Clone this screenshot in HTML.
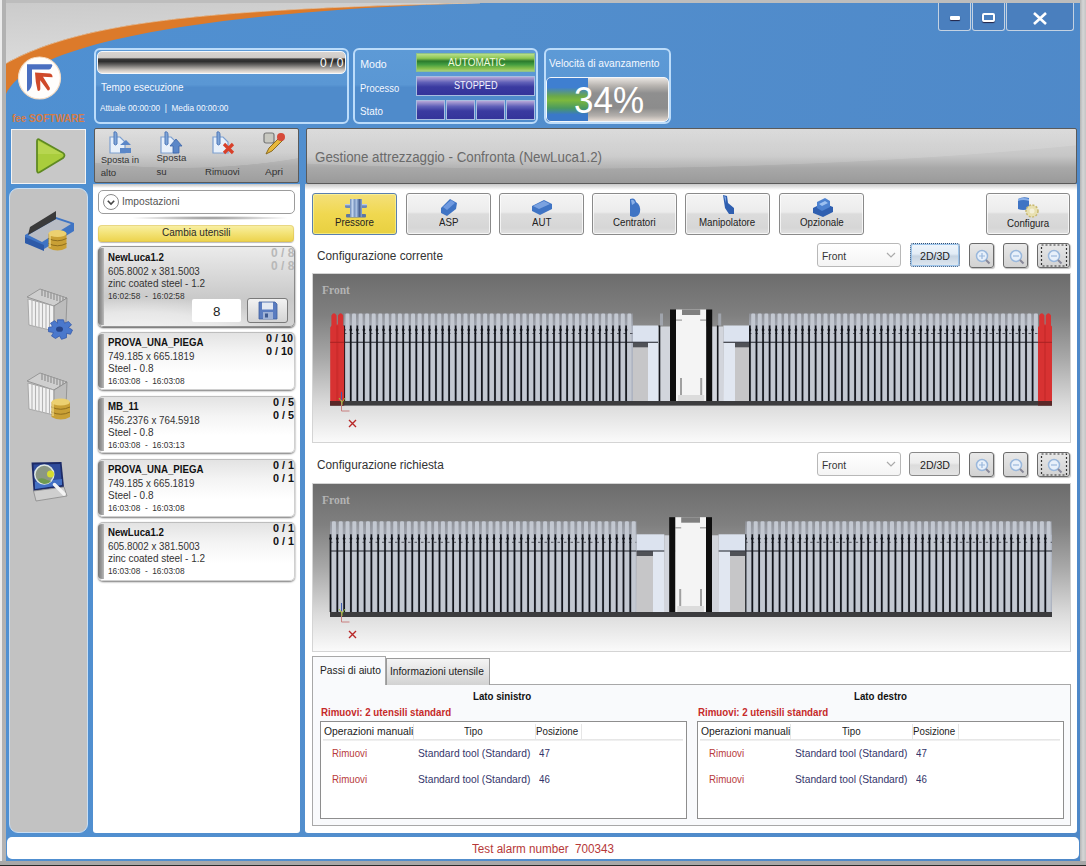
<!DOCTYPE html>
<html><head><meta charset="utf-8"><style>
*{margin:0;padding:0;box-sizing:border-box}
html,body{width:1086px;height:866px;overflow:hidden}
body{position:relative;background:#c4c4c4;font-family:"Liberation Sans",sans-serif;color:#222}
.a{position:absolute}
.t{position:absolute;white-space:pre;line-height:1}
</style></head><body>
<div class="a" style="left:0px;top:0px;width:2px;height:866px;background:#ececec"></div>
<div class="a" style="left:2px;top:0px;width:4px;height:866px;background:#b2b2b2"></div>
<div class="a" style="left:1080px;top:0px;width:6px;height:866px;background:linear-gradient(90deg,#b4b4b4,#d6d6d6 50%,#c4c4c4)"></div>
<div class="a" style="left:6px;top:0px;width:1074px;height:3px;background:#bdbdbd"></div>
<div class="a" style="left:0px;top:861px;width:1086px;height:5px;background:#a8a8a8"></div>
<div class="a" style="left:0px;top:865px;width:1086px;height:1px;background:#2a2a2a"></div>
<div class="a" style="left:6px;top:3px;width:1074px;height:858px;background:linear-gradient(100deg,#4f90d2 0%,#528ecd 40%,#4e88c8 100%)"></div>
<svg class="a" style="left:6px;top:3px" width="480" height="100" viewBox="6 3 480 100">
<defs><linearGradient id="tg" x1="0" y1="0" x2="0.3" y2="1"><stop offset="0" stop-color="#cbcbcb"/><stop offset="1" stop-color="#dcdcdc"/></linearGradient></defs><path d="M6,3 L482,3 L480,3 C183.9,9.26 76.9,25 6,63.4 Z" fill="url(#tg)"/>
<path d="M6,63.4 C76.9,25 183.9,9.26 480,3 L482,3 C357.7,6.16 40.4,22.17 6,94 Z" fill="#dc7a2a"/>
<path d="M6,63.4 C76.9,25 183.9,9.26 480,3" fill="none" stroke="#f0c8a0" stroke-width="1" opacity=".7"/>
</svg>
<svg class="a" style="left:14px;top:52px" width="52" height="52" viewBox="0 0 52 52">
<circle cx="25.5" cy="26" r="21" fill="#fffefc" stroke="#f4dcc4" stroke-width="1.2"/>
<path d="M13,12.3 L37.5,12.3 Q39,12.8 38,14.5 Q37,17.2 35,17.4 L18,17.4 L18,31 Q17.5,37 13.5,39.5 Q13,39 13,37 Z" fill="#4a6fc0"/>
<path d="M21,20.5 L36,21.5 Q38.8,22.5 38.5,25.2 L29,24.8 L35.8,35.8 Q36.2,38.6 33.8,38.4 L26.2,28.2 L26.3,37.2 Q25.6,39.6 23.6,38.6 Q21.3,30 21,20.5 Z" fill="#cf4a2a"/>
</svg>
<div class="t" style="left:11.9px;top:112.8px;font-size:10.8px;color:#e27a36;font-weight:bold;transform:scaleX(0.911);transform-origin:0 0;opacity:.9">fee SOFTWARE</div>
<div class="a" style="left:938px;top:3px;width:33px;height:28px;background:#4a7fbe;border:1.5px solid #c4d2e2;border-top:none;border-radius:0 0 3px 3px"></div>
<div class="a" style="left:972px;top:3px;width:33px;height:28px;background:#4a7fbe;border:1.5px solid #c4d2e2;border-top:none;border-radius:0 0 3px 3px"></div>
<div class="a" style="left:1006px;top:3px;width:68px;height:28px;background:#4a7fbe;border:1.5px solid #c4d2e2;border-top:none;border-radius:0 0 3px 3px"></div>
<div class="a" style="left:950px;top:16px;width:10px;height:4px;background:#fff;border-radius:1px;box-shadow:0 1px 1px #224"></div>
<div class="a" style="left:982px;top:13px;width:13px;height:9px;border:2.5px solid #fff;border-radius:2px;box-shadow:0 1px 1px #224"></div>
<svg class="a" style="left:1032px;top:12px" width="16" height="13" viewBox="0 0 16 13"><path d="M2,1 L14,12 M14,1 L2,12" stroke="#fff" stroke-width="2.6"/></svg>
<div class="a" style="left:94px;top:48px;width:255px;height:76px;border:2px solid #bcdcfa;border-radius:6px;background:linear-gradient(#5d9ad6 0%,#5a97d4 48%,#4f8bcb 52%,#4f8bcb 100%)"></div>
<div class="a" style="left:97px;top:51px;width:249px;height:23px;border:1.5px solid #f4f8fc;border-radius:5px;background:linear-gradient(#d8d4d0 0%,#d0ccc8 26%,#3a3a3a 34%,#2e2e2e 45%,#6a6866 62%,#c8c2bc 85%,#eee6de 100%)"></div>
<div class="t" style="left:320.0px;top:57.4px;font-size:12.5px;color:#fff;transform:scaleX(0.966);transform-origin:0 0;">0 / 0</div>
<div class="t" style="left:100.6px;top:81.9px;font-size:11.5px;color:#f4f8ff;transform:scaleX(0.861);transform-origin:0 0;">Tempo esecuzione</div>
<div class="t" style="left:100.2px;top:104.4px;font-size:8.8px;color:#f4f8ff;transform:scaleX(0.939);transform-origin:0 0;">Attuale 00:00:00  |  Media 00:00:00</div>
<div class="a" style="left:353px;top:48px;width:185px;height:76px;border:2px solid #bcdcfa;border-radius:6px;background:linear-gradient(#5d9ad6 0%,#5a97d4 48%,#4f8bcb 52%,#4f8bcb 100%)"></div>
<div class="t" style="left:360.2px;top:59.0px;font-size:10.6px;color:#f4f8ff;">Modo</div>
<div class="t" style="left:360.2px;top:82.8px;font-size:10.6px;color:#f4f8ff;transform:scaleX(0.889);transform-origin:0 0;">Processo</div>
<div class="t" style="left:360.2px;top:106.2px;font-size:10.6px;color:#f4f8ff;transform:scaleX(0.929);transform-origin:0 0;">Stato</div>
<div class="a" style="left:416px;top:53px;width:119px;height:19px;border:1px solid #8fc28a;background:linear-gradient(#b9df8a 0%,#8cc653 25%,#2c7a2c 42%,#3f9a3f 60%,#84bf4c 85%,#a8cf7a 100%)"></div>
<div class="t" style="left:447.6px;top:57.0px;font-size:11px;color:#f2fadc;transform:scaleX(0.902);transform-origin:0 0;">AUTOMATIC</div>
<div class="a" style="left:416px;top:76px;width:119px;height:20px;border:1px solid #a9bde0;background:linear-gradient(#b8a8d8 0%,#6060b8 30%,#3a3aa0 55%,#34349a 100%)"></div>
<div class="t" style="left:454.2px;top:80.4px;font-size:11px;color:#f4f4ff;transform:scaleX(0.831);transform-origin:0 0;">STOPPED</div>
<div class="a" style="left:416px;top:100px;width:29px;height:20px;border:1px solid #a9bde0;background:linear-gradient(#b8a8d8 0%,#6060b8 30%,#3a3aa0 55%,#34349a 100%)"></div>
<div class="a" style="left:446px;top:100px;width:29px;height:20px;border:1px solid #a9bde0;background:linear-gradient(#b8a8d8 0%,#6060b8 30%,#3a3aa0 55%,#34349a 100%)"></div>
<div class="a" style="left:476px;top:100px;width:29px;height:20px;border:1px solid #a9bde0;background:linear-gradient(#b8a8d8 0%,#6060b8 30%,#3a3aa0 55%,#34349a 100%)"></div>
<div class="a" style="left:506px;top:100px;width:29px;height:20px;border:1px solid #a9bde0;background:linear-gradient(#b8a8d8 0%,#6060b8 30%,#3a3aa0 55%,#34349a 100%)"></div>
<div class="a" style="left:544px;top:48px;width:127px;height:76px;border:2px solid #bcdcfa;border-radius:6px;background:linear-gradient(#5d9ad6 0%,#5a97d4 48%,#4f8bcb 52%,#4f8bcb 100%)"></div>
<div class="t" style="left:548.6px;top:57.8px;font-size:10.6px;color:#f4f8ff;transform:scaleX(0.962);transform-origin:0 0;">Velocità di avanzamento</div>
<div class="a" style="left:546px;top:77px;width:123px;height:45px;border:1.5px solid #f2f6fa;border-radius:5px;background:linear-gradient(#e8e4e0 0%,#b8b4b0 18%,#8f8f8f 35%,#8c8c8c 70%,#b4b0ac 88%,#e6dcd4 100%);overflow:hidden"></div>
<div class="a" style="left:547px;top:78px;width:41px;height:43px;background:linear-gradient(#3f7fd0 0%,#3f7fd0 22%,#6aa84a 42%,#7cb83e 52%,#4a9a60 70%,#3a78c8 85%,#3a78c8 100%);border-radius:4px 0 0 4px"></div>
<div class="t" style="left:574.2px;top:82.9px;font-size:36px;color:#fff;transform:scaleX(0.972);transform-origin:0 0;">34%</div>
<div class="a" style="left:11px;top:129px;width:75px;height:55px;background:#c8c8c8;border:1px solid #f4f4f4"></div>
<svg class="a" style="left:33px;top:137px" width="34" height="38" viewBox="0 0 34 38">
<path d="M4,4 Q4,1 7,3 L30,16 Q33,18 30,21 L7,35 Q4,37 4,33 Z" fill="#a9cd3c" stroke="#5f8a22" stroke-width="1.8"/>
<path d="M5,4 L30,17 L5,17 Z" fill="#c2dc5e" opacity=".6"/>
</svg>
<div class="a" style="left:9px;top:188px;width:79px;height:645px;background:#c2c2c2;border:1px solid #c9def3;border-radius:9px"></div>
<svg class="a" style="left:22px;top:207px" width="56" height="48" viewBox="0 0 56 48">
<path d="M3,28 L34,10 L52,16 L52,24 L22,42 L3,36 Z" fill="#3f74c4"/>
<path d="M6,28 L34,12 L49,17 L20,35 Z" fill="#b8bcc4"/>
<path d="M6,28 L34,12 L34,4 L8,20 Z" fill="#3a3a3a"/>
<path d="M3,30 L22,38 L22,44 L3,36 Z" fill="#2d5aa8"/>
<path d="M26.5,26.5 L26.5,41 Q35.5,46 44.5,41 L44.5,26.5 Z" fill="#c9a035"/>
<ellipse cx="35.5" cy="26.5" rx="9" ry="3.5" fill="#ecd070"/>
<path d="M26.5,31.5 Q35.5,36 44.5,31.5 M26.5,36.5 Q35.5,41 44.5,36.5" stroke="#8f6e1d" stroke-width="1" fill="none"/>
<path d="M28,28 V40" stroke="#f4e090" stroke-width="2" opacity=".6"/>
</svg>
<svg class="a" style="left:25px;top:287px" width="52" height="56" viewBox="0 0 52 56">
<path d="M2,10 L15,2 L42,11 L29,19 Z" fill="#cfcfcf" stroke="#8a8a8a" stroke-width=".8"/>
<path d="M17,3 V-4 M20,4 V-3 M23,5 V-2 M26,6 V-1 M29,7 V0 M32,8 V1 M35,9 V2 M38,10 V3 M41,11 V4" stroke="#9a9a9a" stroke-width="1.4" transform="translate(0,6)"/>
<path d="M3,12 L29,19 L29,44 L4,38 Z" fill="#f2f2f2" stroke="#9a9a9a" stroke-width=".8"/>
<path d="M7,13 V39 M10.5,14 V40 M14,15 V41 M17.5,16 V42 M21,17 V42.5 M24.5,18 V43" stroke="#b4b4b4" stroke-width="1.1"/>
<path d="M29,19 L42,11 L41,35 L29,44 Z" fill="#bcbcbc" stroke="#8a8a8a" stroke-width=".8"/>
<g transform="translate(35.5,43) scale(1,.85)">
<path d="M-3,-12 L3,-12 L4,-8 L8,-10 L11,-6 L8,-3 L12,0 L10,5 L6,4 L6,9 L1,11 L-1,7 L-5,10 L-9,7 L-7,3 L-12,2 L-12,-3 L-8,-4 L-10,-8 L-6,-11 L-3,-8 Z" fill="#4a78cc" stroke="#2f56a8" stroke-width=".8"/>
<ellipse cx="-1" cy="-1" rx="3.5" ry="3" fill="#27458a"/>
</g>
</svg>
<svg class="a" style="left:26px;top:371px" width="46" height="52" viewBox="0 0 46 52">
<path d="M1,10 L14,2 L41,11 L28,19 Z" fill="#cfcfcf" stroke="#8a8a8a" stroke-width=".8"/>
<path d="M16,3 V-4 M19,4 V-3 M22,5 V-2 M25,6 V-1 M28,7 V0 M31,8 V1 M34,9 V2 M37,10 V3 M40,11 V4" stroke="#9a9a9a" stroke-width="1.4" transform="translate(0,6)"/>
<path d="M2,12 L28,19 L28,44 L3,38 Z" fill="#f2f2f2" stroke="#9a9a9a" stroke-width=".8"/>
<path d="M6,13 V39 M9.5,14 V40 M13,15 V41 M16.5,16 V42 M20,17 V42.5 M23.5,18 V43" stroke="#b4b4b4" stroke-width="1.1"/>
<path d="M28,19 L41,11 L40,35 L28,44 Z" fill="#bcbcbc" stroke="#8a8a8a" stroke-width=".8"/>
<path d="M25.5,31 L25.5,46 Q34.7,51 44,46 L44,31 Z" fill="#c9a035"/>
<ellipse cx="34.7" cy="31" rx="9.2" ry="3.6" fill="#ecd070"/>
<path d="M25.5,36 Q34.7,40.5 44,36 M25.5,41 Q34.7,45.5 44,41" stroke="#8f6e1d" stroke-width="1" fill="none"/>
<path d="M27,32.5 V45" stroke="#f4e090" stroke-width="2" opacity=".6"/>
</svg>
<svg class="a" style="left:29px;top:460px" width="40" height="44" viewBox="0 0 40 44">
<path d="M2.5,2.5 L32.5,2 L35,27 L4.5,31 Z" fill="#1c2a66"/>
<path d="M4.5,4.5 L31,4 L33,25 L6,29 Z" fill="#2f4c9c"/>
<path d="M6,22 L33,19 L33,25 L6,29 Z" fill="#4a7ad0" opacity=".8"/>
<path d="M4.5,31 L35,27 L38,36 L7,41 Z" fill="#cfcfcf" stroke="#8a8a8a" stroke-width=".8"/>
<circle cx="15.3" cy="14.6" r="9.5" fill="#8b9784" stroke="#dfe8e4" stroke-width="1.5"/>
<path d="M9,19 Q14,17 18,20 L22,21 Q20,24 15,24 Q10,23 9,19 Z" fill="#6f9a50"/>
<circle cx="21.5" cy="14" r="3.5" fill="#d6dc30"/>
<path d="M25.5,24.5 L35,34" stroke="#f4f4f4" stroke-width="3.5" stroke-linecap="round"/>
</svg>
<div class="a" style="left:94px;top:128px;width:205px;height:55px;border:1px solid #5a5a5a;border-radius:2px;background:radial-gradient(ellipse 245px 79px at 86px -40px,rgba(255,255,255,.16) 99.3%,rgba(255,255,255,0) 100%),linear-gradient(#d8d8d8 0%,#c6c6c6 45%,#acacac 70%,#9e9e9e 100%)"></div>
<svg class="a" style="left:108px;top:131px" width="24" height="24" viewBox="0 0 24 24">
<path d="M2,6 L12,6 L17,11 L17,22 L2,22 Z" fill="#e8f0fa" stroke="#7c9fd0" stroke-width="1.2"/>
<path d="M6,1 Q9,0 9,4 L9,13 Q7.5,15 6,13 Z" fill="#7fa5d8" stroke="#4f78b8" stroke-width="1"/>
<path d="M12,14 L18,9 L23,14 Z M12,17 L23,17 L23,22 L12,22 Z" fill="#5b87c8"/></svg>
<svg class="a" style="left:159px;top:131px" width="24" height="24" viewBox="0 0 24 24">
<path d="M2,6 L12,6 L17,11 L17,22 L2,22 Z" fill="#e8f0fa" stroke="#7c9fd0" stroke-width="1.2"/>
<path d="M6,1 Q9,0 9,4 L9,13 Q7.5,15 6,13 Z" fill="#7fa5d8" stroke="#4f78b8" stroke-width="1"/>
<path d="M11,15 L17,8 L23,15 L20,15 L20,22 L14,22 L14,15 Z" fill="#5b87c8" stroke="#3e66a8" stroke-width=".8"/></svg>
<svg class="a" style="left:211px;top:131px" width="24" height="24" viewBox="0 0 24 24">
<path d="M2,6 L12,6 L17,11 L17,22 L2,22 Z" fill="#e8f0fa" stroke="#7c9fd0" stroke-width="1.2"/>
<path d="M6,1 Q9,0 9,4 L9,13 Q7.5,15 6,13 Z" fill="#7fa5d8" stroke="#4f78b8" stroke-width="1"/>
<path d="M13,13 L22,22 M22,13 L13,22" stroke="#d8402a" stroke-width="3.2"/></svg>
<svg class="a" style="left:262px;top:132px" width="24" height="24" viewBox="0 0 24 24">
<rect x="2" y="1" width="10" height="10" rx="2" fill="#c8c8c0" stroke="#777" stroke-width="1.2"/>
<path d="M4,22 L7,16 L19,4 L22,7 L10,19 Z" fill="#e8b83a" stroke="#8a6a20" stroke-width="1"/>
<circle cx="19" cy="5" r="4" fill="#d64a3a"/>
</svg>
<div class="t" style="left:100.7px;top:155.4px;font-size:9.6px;color:#333;transform:scaleX(0.949);transform-origin:0 0;">Sposta in</div>
<div class="t" style="left:100.7px;top:167.6px;font-size:9.6px;color:#333;">alto</div>
<div class="t" style="left:156.4px;top:153.4px;font-size:9.6px;color:#333;">Sposta</div>
<div class="t" style="left:156.4px;top:167.1px;font-size:9.6px;color:#333;">su</div>
<div class="t" style="left:205.0px;top:167.3px;font-size:9.6px;color:#333;">Rimuovi</div>
<div class="t" style="left:265.0px;top:167.3px;font-size:9.6px;color:#333;transform:scaleX(1.054);transform-origin:0 0;">Apri</div>
<div class="a" style="left:93px;top:184px;width:207px;height:649px;background:#fff;border-radius:0 0 3px 3px"></div>
<div class="a" style="left:93px;top:184px;width:207px;height:4px;background:linear-gradient(#c4c4c4,#fff)"></div>
<div class="a" style="left:98px;top:190px;width:197px;height:24px;border:1px solid #9c9c9c;border-radius:5px;background:#fff"></div>
<svg class="a" style="left:102px;top:193px" width="18" height="18" viewBox="0 0 18 18"><circle cx="9" cy="9" r="7.5" fill="#fff" stroke="#8a8a8a" stroke-width="1"/><path d="M5.8,7.8 L9,11 L12.2,7.8" fill="none" stroke="#444" stroke-width="1.6"/></svg>
<div class="t" style="left:122.2px;top:196.2px;font-size:10.8px;color:#555;transform:scaleX(0.947);transform-origin:0 0;">Impostazioni</div>
<div class="a" style="left:130px;top:216px;width:160px;height:4px;background:radial-gradient(ellipse 50% 50% at 50% 50%,#8a8a8a 0%,rgba(160,160,160,.5) 60%,rgba(255,255,255,0) 100%)"></div>
<div class="a" style="left:98px;top:225px;width:196px;height:17px;border-radius:4px;background:linear-gradient(#f8f0a8 0%,#f4e47a 45%,#ecd24a 100%);box-shadow:0 1px 1px #bbb, inset 0 0 0 1px rgba(210,180,80,.4)"></div>
<div class="t" style="left:162.4px;top:227.2px;font-size:10.8px;color:#2a2a2a;transform:scaleX(0.928);transform-origin:0 0;">Cambia utensili</div>
<div class="a" style="left:98px;top:246px;width:197px;height:81px;border-radius:5px;background:radial-gradient(ellipse 150px 40px at 40px 90px,rgba(255,255,255,.75) 0%,rgba(255,255,255,.5) 60%,rgba(255,255,255,0) 100%),linear-gradient(#ececec 0%,#dcdcdc 30%,#c9c9c9 65%,#d4d4d4 100%);box-shadow:0 1px 2px #555, inset 0 0 0 1px rgba(80,80,80,.55)"></div>
<div class="a" style="left:98px;top:248px;width:6px;height:77px;border-radius:4px 0 0 4px;background:linear-gradient(90deg,#777 0%,#9a9a9a 60%,#bbb 100%)"></div>
<div class="t" style="left:107.9px;top:251.7px;font-size:10.5px;color:#111;font-weight:bold;transform:scaleX(0.920);transform-origin:0 0;">NewLuca1.2</div>
<div class="t" style="left:107.9px;top:265.5px;font-size:10.5px;color:#333;transform:scaleX(0.930);transform-origin:0 0;">605.8002 x 381.5003</div>
<div class="t" style="left:107.9px;top:278.2px;font-size:10.5px;color:#333;transform:scaleX(0.950);transform-origin:0 0;">zinc coated steel - 1.2</div>
<div class="t" style="left:107.9px;top:292.1px;font-size:8.4px;color:#333;transform:scaleX(0.990);transform-origin:0 0;">16:02:58  -  16:02:58</div>
<div class="a" style="left:260px;top:247px;width:34px;height:30px;overflow:hidden"><div class="t" style="left:11.0px;top:0.4px;font-size:12px;color:#b8b8b8;font-weight:bold;">0 / 8</div>
<div class="t" style="left:11.0px;top:13.2px;font-size:12px;color:#b8b8b8;font-weight:bold;">0 / 8</div>
</div><div class="a" style="left:192px;top:299px;width:49px;height:23px;background:#fff;border-radius:2px"></div>
<div class="t" style="left:212.9px;top:304.5px;font-size:13.4px;color:#222;">8</div>
<div class="a" style="left:247px;top:298px;width:41px;height:25px;border:1px solid #7a7a7a;border-radius:3px;background:linear-gradient(#f2f2f2,#d4d4d4)"></div>
<svg class="a" style="left:258px;top:301px" width="20" height="19" viewBox="0 0 20 19"><path d="M1,1 L17,1 L19,3 L19,18 L1,18 Z" fill="#5a7cc0" stroke="#3f5f9f" stroke-width=".8"/><rect x="4" y="1.5" width="11" height="7" fill="#e4e9f2"/><rect x="5" y="11" width="10" height="7" fill="#9fb2d6"/><rect x="7" y="12.5" width="3" height="4" fill="#3f5a90"/></svg>
<div class="a" style="left:98px;top:332px;width:197px;height:58px;border-radius:5px;background:linear-gradient(#e2e2e2 0%,#f4f4f4 35%,#ffffff 70%,#ffffff 100%);box-shadow:0 1px 2px #777, inset 0 0 0 1px rgba(120,120,120,.35)"></div>
<div class="a" style="left:98px;top:334px;width:6px;height:54px;border-radius:4px 0 0 4px;background:linear-gradient(90deg,#777 0%,#9a9a9a 60%,#bbb 100%)"></div>
<div class="t" style="left:107.9px;top:336.7px;font-size:10.5px;color:#111;font-weight:bold;transform:scaleX(0.920);transform-origin:0 0;">PROVA_UNA_PIEGA</div>
<div class="t" style="left:107.9px;top:350.5px;font-size:10.5px;color:#333;transform:scaleX(0.930);transform-origin:0 0;">749.185 x 665.1819</div>
<div class="t" style="left:107.9px;top:363.2px;font-size:10.5px;color:#333;transform:scaleX(0.950);transform-origin:0 0;">Steel - 0.8</div>
<div class="t" style="left:107.9px;top:377.1px;font-size:8.4px;color:#333;transform:scaleX(0.990);transform-origin:0 0;">16:03:08  -  16:03:08</div>
<div class="t" style="left:266.4px;top:333.3px;font-size:10.5px;color:#111;font-weight:bold;transform:scaleX(1.030);transform-origin:0 0;">0 / 10</div>
<div class="t" style="left:266.4px;top:345.6px;font-size:10.5px;color:#111;font-weight:bold;transform:scaleX(1.030);transform-origin:0 0;">0 / 10</div>
<div class="a" style="left:98px;top:396px;width:197px;height:57px;border-radius:5px;background:linear-gradient(#e2e2e2 0%,#f4f4f4 35%,#ffffff 70%,#ffffff 100%);box-shadow:0 1px 2px #777, inset 0 0 0 1px rgba(120,120,120,.35)"></div>
<div class="a" style="left:98px;top:398px;width:6px;height:53px;border-radius:4px 0 0 4px;background:linear-gradient(90deg,#777 0%,#9a9a9a 60%,#bbb 100%)"></div>
<div class="t" style="left:107.9px;top:400.7px;font-size:10.5px;color:#111;font-weight:bold;transform:scaleX(0.920);transform-origin:0 0;">MB_11</div>
<div class="t" style="left:107.9px;top:414.5px;font-size:10.5px;color:#333;transform:scaleX(0.930);transform-origin:0 0;">456.2376 x 764.5918</div>
<div class="t" style="left:107.9px;top:427.2px;font-size:10.5px;color:#333;transform:scaleX(0.950);transform-origin:0 0;">Steel - 0.8</div>
<div class="t" style="left:107.9px;top:441.1px;font-size:8.4px;color:#333;transform:scaleX(0.990);transform-origin:0 0;">16:03:08  -  16:03:13</div>
<div class="t" style="left:272.5px;top:397.3px;font-size:10.5px;color:#111;font-weight:bold;transform:scaleX(1.030);transform-origin:0 0;">0 / 5</div>
<div class="t" style="left:272.5px;top:409.6px;font-size:10.5px;color:#111;font-weight:bold;transform:scaleX(1.030);transform-origin:0 0;">0 / 5</div>
<div class="a" style="left:98px;top:459px;width:197px;height:58px;border-radius:5px;background:linear-gradient(#e2e2e2 0%,#f4f4f4 35%,#ffffff 70%,#ffffff 100%);box-shadow:0 1px 2px #777, inset 0 0 0 1px rgba(120,120,120,.35)"></div>
<div class="a" style="left:98px;top:461px;width:6px;height:54px;border-radius:4px 0 0 4px;background:linear-gradient(90deg,#777 0%,#9a9a9a 60%,#bbb 100%)"></div>
<div class="t" style="left:107.9px;top:463.7px;font-size:10.5px;color:#111;font-weight:bold;transform:scaleX(0.920);transform-origin:0 0;">PROVA_UNA_PIEGA</div>
<div class="t" style="left:107.9px;top:477.5px;font-size:10.5px;color:#333;transform:scaleX(0.930);transform-origin:0 0;">749.185 x 665.1819</div>
<div class="t" style="left:107.9px;top:490.2px;font-size:10.5px;color:#333;transform:scaleX(0.950);transform-origin:0 0;">Steel - 0.8</div>
<div class="t" style="left:107.9px;top:504.1px;font-size:8.4px;color:#333;transform:scaleX(0.990);transform-origin:0 0;">16:03:08  -  16:03:08</div>
<div class="t" style="left:272.5px;top:460.3px;font-size:10.5px;color:#111;font-weight:bold;transform:scaleX(1.030);transform-origin:0 0;">0 / 1</div>
<div class="t" style="left:272.5px;top:472.6px;font-size:10.5px;color:#111;font-weight:bold;transform:scaleX(1.030);transform-origin:0 0;">0 / 1</div>
<div class="a" style="left:98px;top:522px;width:197px;height:59px;border-radius:5px;background:linear-gradient(#e2e2e2 0%,#f4f4f4 35%,#ffffff 70%,#ffffff 100%);box-shadow:0 1px 2px #777, inset 0 0 0 1px rgba(120,120,120,.35)"></div>
<div class="a" style="left:98px;top:524px;width:6px;height:55px;border-radius:4px 0 0 4px;background:linear-gradient(90deg,#777 0%,#9a9a9a 60%,#bbb 100%)"></div>
<div class="t" style="left:107.9px;top:526.7px;font-size:10.5px;color:#111;font-weight:bold;transform:scaleX(0.920);transform-origin:0 0;">NewLuca1.2</div>
<div class="t" style="left:107.9px;top:540.5px;font-size:10.5px;color:#333;transform:scaleX(0.930);transform-origin:0 0;">605.8002 x 381.5003</div>
<div class="t" style="left:107.9px;top:553.2px;font-size:10.5px;color:#333;transform:scaleX(0.950);transform-origin:0 0;">zinc coated steel - 1.2</div>
<div class="t" style="left:107.9px;top:567.1px;font-size:8.4px;color:#333;transform:scaleX(0.990);transform-origin:0 0;">16:03:08  -  16:03:08</div>
<div class="t" style="left:272.5px;top:523.3px;font-size:10.5px;color:#111;font-weight:bold;transform:scaleX(1.030);transform-origin:0 0;">0 / 1</div>
<div class="t" style="left:272.5px;top:535.6px;font-size:10.5px;color:#111;font-weight:bold;transform:scaleX(1.030);transform-origin:0 0;">0 / 1</div>
<div class="a" style="left:306px;top:128px;width:771px;height:56px;border:1px solid #5a5a5a;border-radius:2px;background:radial-gradient(ellipse 941px 140px at 250px -100px,rgba(255,255,255,.13) 99.5%,rgba(255,255,255,0) 100%),linear-gradient(#d6d6d6 0%,#c6c6c6 50%,#a8a8a8 72%,#9a9a9a 100%)"></div>
<div class="t" style="left:315.0px;top:150.1px;font-size:14px;color:#6a6a6a;transform:scaleX(0.953);transform-origin:0 0;">Gestione attrezzaggio - Confronta (NewLuca1.2)</div>
<div class="a" style="left:305px;top:184px;width:772px;height:649px;background:#fff;border-radius:0 0 3px 3px"></div>
<div class="a" style="left:305px;top:184px;width:772px;height:6px;background:linear-gradient(#c8c8c8,#fff)"></div>
<div class="a" style="left:312px;top:193px;width:85px;height:42px;border:1px solid #5a7fb0;border-radius:3px;background:linear-gradient(#f4e07a 0%,#f0d850 50%,#e8d040 100%);box-shadow:inset 0 0 0 1px rgba(255,255,180,.5)"></div>
<div class="t" style="left:335.1px;top:217.3px;font-size:10.8px;color:#222;transform:scaleX(0.900);transform-origin:0 0;">Pressore</div>
<div class="a" style="left:406px;top:193px;width:85px;height:42px;border:1px solid #8a8a8a;border-radius:3px;background:linear-gradient(#f4f4f4 0%,#ececec 45%,#dcdcdc 50%,#d6d6d6 85%,#e2e2e2 100%);box-shadow:inset 0 0 0 1px rgba(255,255,255,.7)"></div>
<div class="t" style="left:438.8px;top:217.3px;font-size:10.8px;color:#222;transform:scaleX(0.900);transform-origin:0 0;">ASP</div>
<div class="a" style="left:499px;top:193px;width:85px;height:42px;border:1px solid #8a8a8a;border-radius:3px;background:linear-gradient(#f4f4f4 0%,#ececec 45%,#dcdcdc 50%,#d6d6d6 85%,#e2e2e2 100%);box-shadow:inset 0 0 0 1px rgba(255,255,255,.7)"></div>
<div class="t" style="left:531.8px;top:217.3px;font-size:10.8px;color:#222;transform:scaleX(0.900);transform-origin:0 0;">AUT</div>
<div class="a" style="left:592px;top:193px;width:85px;height:42px;border:1px solid #8a8a8a;border-radius:3px;background:linear-gradient(#f4f4f4 0%,#ececec 45%,#dcdcdc 50%,#d6d6d6 85%,#e2e2e2 100%);box-shadow:inset 0 0 0 1px rgba(255,255,255,.7)"></div>
<div class="t" style="left:613.2px;top:217.3px;font-size:10.8px;color:#222;transform:scaleX(0.900);transform-origin:0 0;">Centratori</div>
<div class="a" style="left:685px;top:193px;width:85px;height:42px;border:1px solid #8a8a8a;border-radius:3px;background:linear-gradient(#f4f4f4 0%,#ececec 45%,#dcdcdc 50%,#d6d6d6 85%,#e2e2e2 100%);box-shadow:inset 0 0 0 1px rgba(255,255,255,.7)"></div>
<div class="t" style="left:699.4px;top:217.3px;font-size:10.8px;color:#222;transform:scaleX(0.900);transform-origin:0 0;">Manipolatore</div>
<div class="a" style="left:779px;top:193px;width:85px;height:42px;border:1px solid #8a8a8a;border-radius:3px;background:linear-gradient(#f4f4f4 0%,#ececec 45%,#dcdcdc 50%,#d6d6d6 85%,#e2e2e2 100%);box-shadow:inset 0 0 0 1px rgba(255,255,255,.7)"></div>
<div class="t" style="left:799.6px;top:217.3px;font-size:10.8px;color:#222;transform:scaleX(0.900);transform-origin:0 0;">Opzionale</div>
<div class="a" style="left:986px;top:193px;width:84px;height:42px;border:1px solid #8a8a8a;border-radius:3px;background:linear-gradient(#f4f4f4 0%,#ececec 45%,#dcdcdc 50%,#d6d6d6 85%,#e2e2e2 100%);box-shadow:inset 0 0 0 1px rgba(255,255,255,.7)"></div>
<div class="t" style="left:1006.9px;top:217.7px;font-size:10.8px;color:#222;transform:scaleX(0.900);transform-origin:0 0;">Configura</div>
<svg class="a" style="left:343px;top:197px" width="26" height="22" viewBox="0 0 26 22">
<rect x="2" y="7" width="22" height="4" rx="1.5" fill="#6d88b6"/>
<rect x="3" y="17" width="20" height="3.5" rx="1" fill="#5d77a4"/>
<rect x="7" y="2" width="12" height="18" fill="#7f9ac4"/>
<rect x="8.5" y="2" width="2" height="18" fill="#c0d2ec"/><rect x="12.5" y="2" width="1.6" height="18" fill="#a9bfe0"/><rect x="15.5" y="2" width="2" height="18" fill="#4d6494"/>
<rect x="2" y="7" width="5" height="1.3" fill="#b8cae6"/><rect x="19" y="7" width="5" height="1.3" fill="#b8cae6"/>
</svg>
<svg class="a" style="left:438px;top:197px" width="22" height="20" viewBox="0 0 22 20"><path d="M3,11 L12,2 L19,6 L18,12 L9,19 L3,16 Z" fill="#3f74c4"/><path d="M5,10 L13,3 L17,6 L9,13 Z" fill="#6f9ae0"/></svg>
<svg class="a" style="left:530px;top:197px" width="24" height="20" viewBox="0 0 24 20"><path d="M2,9 L14,3 L22,7 L22,12 L10,18 L2,14 Z" fill="#3f74c4"/><path d="M3,9 L14,4 L20,7 L9,12 Z" fill="#7aa2e0"/></svg>
<svg class="a" style="left:627px;top:197px" width="16" height="22" viewBox="0 0 16 22"><path d="M3,2 Q8,0 9,5 Q14,8 13,15 Q12,20 6,20 L3,19 Z" fill="#3f74c4"/><path d="M4,3 Q7,2 8,6 L5,8 Z" fill="#8ab0e8"/></svg>
<svg class="a" style="left:719px;top:194px" width="20" height="24" viewBox="0 0 20 24"><path d="M4,1 L8,2 L9,9 L15,14 L15,20 L10,20 L6,14 Z" fill="#2f5fb0"/><path d="M5,2 L7,3 L7,9 Z" fill="#7aa2e0"/></svg>
<svg class="a" style="left:811px;top:196px" width="24" height="22" viewBox="0 0 24 22"><path d="M2,12 L12,7 L22,11 L22,16 L12,21 L2,17 Z" fill="#2f5fb0"/><path d="M6,6 L14,2 L19,5 L19,11 L11,15 L6,12 Z" fill="#4d82d0"/><path d="M8,8 L14,5 L17,7 L11,10 Z" fill="#9cc0f0"/></svg>
<svg class="a" style="left:1015px;top:195px" width="26" height="24" viewBox="0 0 26 24"><path d="M3,4 Q8,1 14,3 L14,14 Q8,16 3,14 Z" fill="#3f74c4"/><path d="M3,4 Q8,2 14,4 L14,6 Q8,4 3,6 Z" fill="#8ab0e8"/>
<circle cx="17" cy="16" r="6" fill="#e8e0b0" stroke="#c8b870" stroke-width="1.5" stroke-dasharray="2,1.5"/><circle cx="17" cy="16" r="2.5" fill="#f4f0d8"/></svg>
<div class="t" style="left:317.0px;top:249.9px;font-size:12.5px;color:#333;transform:scaleX(0.944);transform-origin:0 0;">Configurazione corrente</div>
<div class="a" style="left:817px;top:243px;width:84px;height:24px;border:1px solid #b8b8b8;border-radius:3px;background:linear-gradient(#fff,#f4f4f4)"></div>
<div class="t" style="left:822.0px;top:251.1px;font-size:10.8px;color:#333;transform:scaleX(0.952);transform-origin:0 0;">Front</div>
<svg class="a" style="left:886px;top:252px" width="10" height="6" viewBox="0 0 10 6"><path d="M1,1 L5,5 L9,1" fill="none" stroke="#aaa" stroke-width="1.2"/></svg>
<div class="a" style="left:910px;top:243px;width:50px;height:24px;border:1px dotted #2c4f7a;border-radius:3px;background:linear-gradient(#f0f6fc 0%,#e2ecf6 45%,#c6d4e2 55%,#e0e8f0 100%);box-shadow:inset 0 0 0 1px #9cc4ea"></div>
<div class="t" style="left:920.0px;top:251.2px;font-size:10.8px;color:#222;transform:scaleX(0.980);transform-origin:0 0;">2D/3D</div>
<div class="t" style="left:317.0px;top:458.6px;font-size:12.5px;color:#333;transform:scaleX(0.945);transform-origin:0 0;">Configurazione richiesta</div>
<div class="a" style="left:817px;top:452px;width:84px;height:24px;border:1px solid #b8b8b8;border-radius:3px;background:linear-gradient(#fff,#f4f4f4)"></div>
<div class="t" style="left:822.0px;top:460.1px;font-size:10.8px;color:#333;transform:scaleX(0.952);transform-origin:0 0;">Front</div>
<svg class="a" style="left:886px;top:461px" width="10" height="6" viewBox="0 0 10 6"><path d="M1,1 L5,5 L9,1" fill="none" stroke="#aaa" stroke-width="1.2"/></svg>
<div class="a" style="left:909px;top:452px;width:51px;height:24px;border:1px solid #8a8a8a;border-radius:3px;background:linear-gradient(#f4f4f4 0%,#ececec 45%,#dcdcdc 55%,#e4e4e4 100%)"></div>
<div class="t" style="left:920.0px;top:460.2px;font-size:10.8px;color:#222;transform:scaleX(0.980);transform-origin:0 0;">2D/3D</div>
<div class="a" style="left:969px;top:243px;width:25px;height:25px;border:1px solid #6a6a6a;border-radius:3px;background:linear-gradient(#e8e8e8,#d2d2d2);box-shadow:1px 1px 1px rgba(0,0,0,.25)"></div>
<svg class="a" style="left:972.5px;top:247px" width="20" height="18" viewBox="0 0 20 18" overflow="visible"><circle cx="9" cy="9" r="5.5" fill="#e8f0fa" stroke="#9ab8dc" stroke-width="1.5"/><path d="M6,9 H12 M9,6 V12" stroke="#9ab8dc" stroke-width="1.2"/><path d="M13,13 L16.5,16.5" stroke="#889" stroke-width="2"/></svg>
<div class="a" style="left:1003px;top:243px;width:25px;height:25px;border:1px solid #6a6a6a;border-radius:3px;background:linear-gradient(#e8e8e8,#d2d2d2);box-shadow:1px 1px 1px rgba(0,0,0,.25)"></div>
<svg class="a" style="left:1006.5px;top:247px" width="20" height="18" viewBox="0 0 20 18" overflow="visible"><circle cx="9" cy="9" r="5.5" fill="#e8f0fa" stroke="#9ab8dc" stroke-width="1.5"/><path d="M6,9 H12" stroke="#9ab8dc" stroke-width="1.2"/><path d="M13,13 L16.5,16.5" stroke="#889" stroke-width="2"/></svg>
<div class="a" style="left:1037px;top:243px;width:33px;height:25px;border:1px solid #6a6a6a;border-radius:3px;background:linear-gradient(#e8e8e8,#d2d2d2);box-shadow:1px 1px 1px rgba(0,0,0,.25)"></div>
<svg class="a" style="left:1044.5px;top:247px" width="20" height="18" viewBox="0 0 20 18" overflow="visible"><rect x="-3.5" y="-2" width="25" height="21" fill="none" stroke="#333" stroke-width="1.2" stroke-dasharray="2,2"/><circle cx="9" cy="9" r="5.5" fill="#e8f0fa" stroke="#9ab8dc" stroke-width="1.5"/><path d="M6,9 H12" stroke="#9ab8dc" stroke-width="1.2"/><path d="M13,13 L16.5,16.5" stroke="#889" stroke-width="2"/></svg>
<div class="a" style="left:969px;top:452px;width:25px;height:25px;border:1px solid #6a6a6a;border-radius:3px;background:linear-gradient(#e8e8e8,#d2d2d2);box-shadow:1px 1px 1px rgba(0,0,0,.25)"></div>
<svg class="a" style="left:972.5px;top:456px" width="20" height="18" viewBox="0 0 20 18" overflow="visible"><circle cx="9" cy="9" r="5.5" fill="#e8f0fa" stroke="#9ab8dc" stroke-width="1.5"/><path d="M6,9 H12 M9,6 V12" stroke="#9ab8dc" stroke-width="1.2"/><path d="M13,13 L16.5,16.5" stroke="#889" stroke-width="2"/></svg>
<div class="a" style="left:1003px;top:452px;width:25px;height:25px;border:1px solid #6a6a6a;border-radius:3px;background:linear-gradient(#e8e8e8,#d2d2d2);box-shadow:1px 1px 1px rgba(0,0,0,.25)"></div>
<svg class="a" style="left:1006.5px;top:456px" width="20" height="18" viewBox="0 0 20 18" overflow="visible"><circle cx="9" cy="9" r="5.5" fill="#e8f0fa" stroke="#9ab8dc" stroke-width="1.5"/><path d="M6,9 H12" stroke="#9ab8dc" stroke-width="1.2"/><path d="M13,13 L16.5,16.5" stroke="#889" stroke-width="2"/></svg>
<div class="a" style="left:1037px;top:452px;width:33px;height:25px;border:1px solid #6a6a6a;border-radius:3px;background:linear-gradient(#e8e8e8,#d2d2d2);box-shadow:1px 1px 1px rgba(0,0,0,.25)"></div>
<svg class="a" style="left:1044.5px;top:456px" width="20" height="18" viewBox="0 0 20 18" overflow="visible"><rect x="-3.5" y="-2" width="25" height="21" fill="none" stroke="#333" stroke-width="1.2" stroke-dasharray="2,2"/><circle cx="9" cy="9" r="5.5" fill="#e8f0fa" stroke="#9ab8dc" stroke-width="1.5"/><path d="M6,9 H12" stroke="#9ab8dc" stroke-width="1.2"/><path d="M13,13 L16.5,16.5" stroke="#889" stroke-width="2"/></svg>
<svg class="a" style="left:312px;top:273px" width="759" height="170" viewBox="312 273 759 170"><defs><linearGradient id="g1" x1="0" y1="0" x2="0" y2="1"><stop offset="0" stop-color="#6c6c6c"/><stop offset="0.25" stop-color="#808080"/><stop offset="0.5" stop-color="#a8a8a8"/><stop offset="0.78" stop-color="#dcdcdc"/><stop offset="1" stop-color="#fbfbfb"/></linearGradient><linearGradient id="tipg1" x1="0" y1="0" x2="0" y2="1"><stop offset="0" stop-color="#8e9096"/><stop offset="1" stop-color="#a2a7b1"/></linearGradient></defs><rect x="312" y="273" width="759" height="170" fill="url(#g1)"/><rect x="312.5" y="273.5" width="758" height="169" fill="none" stroke="#d4d4d4"/><rect x="330" y="401" width="722" height="4.600000000000023" fill="#3c3c3e"/><rect x="344" y="313.5" width="289" height="12.0" fill="url(#tipg1)"/>
<rect x="344" y="325.5" width="289" height="75.5" fill="#aeb4c1"/>
<rect x="345.48" y="313.5" width="4.00" height="87.5" rx="1.2" fill="#c3c8d1"/>
<rect x="352.03" y="313.5" width="4.00" height="87.5" rx="1.2" fill="#c3c8d1"/>
<rect x="358.59" y="313.5" width="4.00" height="87.5" rx="1.2" fill="#c3c8d1"/>
<rect x="365.15" y="313.5" width="4.00" height="87.5" rx="1.2" fill="#c3c8d1"/>
<rect x="371.70" y="313.5" width="4.00" height="87.5" rx="1.2" fill="#c3c8d1"/>
<rect x="378.26" y="313.5" width="4.00" height="87.5" rx="1.2" fill="#c3c8d1"/>
<rect x="384.81" y="313.5" width="4.00" height="87.5" rx="1.2" fill="#c3c8d1"/>
<rect x="391.37" y="313.5" width="4.00" height="87.5" rx="1.2" fill="#c3c8d1"/>
<rect x="397.92" y="313.5" width="4.00" height="87.5" rx="1.2" fill="#c3c8d1"/>
<rect x="404.48" y="313.5" width="4.00" height="87.5" rx="1.2" fill="#c3c8d1"/>
<rect x="411.04" y="313.5" width="4.00" height="87.5" rx="1.2" fill="#c3c8d1"/>
<rect x="417.59" y="313.5" width="4.00" height="87.5" rx="1.2" fill="#c3c8d1"/>
<rect x="424.15" y="313.5" width="4.00" height="87.5" rx="1.2" fill="#c3c8d1"/>
<rect x="430.70" y="313.5" width="4.00" height="87.5" rx="1.2" fill="#c3c8d1"/>
<rect x="437.26" y="313.5" width="4.00" height="87.5" rx="1.2" fill="#c3c8d1"/>
<rect x="443.82" y="313.5" width="4.00" height="87.5" rx="1.2" fill="#c3c8d1"/>
<rect x="450.37" y="313.5" width="4.00" height="87.5" rx="1.2" fill="#c3c8d1"/>
<rect x="456.93" y="313.5" width="4.00" height="87.5" rx="1.2" fill="#c3c8d1"/>
<rect x="463.48" y="313.5" width="4.00" height="87.5" rx="1.2" fill="#c3c8d1"/>
<rect x="470.04" y="313.5" width="4.00" height="87.5" rx="1.2" fill="#c3c8d1"/>
<rect x="476.59" y="313.5" width="4.00" height="87.5" rx="1.2" fill="#c3c8d1"/>
<rect x="483.15" y="313.5" width="4.00" height="87.5" rx="1.2" fill="#c3c8d1"/>
<rect x="489.71" y="313.5" width="4.00" height="87.5" rx="1.2" fill="#c3c8d1"/>
<rect x="496.26" y="313.5" width="4.00" height="87.5" rx="1.2" fill="#c3c8d1"/>
<rect x="502.82" y="313.5" width="4.00" height="87.5" rx="1.2" fill="#c3c8d1"/>
<rect x="509.37" y="313.5" width="4.00" height="87.5" rx="1.2" fill="#c3c8d1"/>
<rect x="515.93" y="313.5" width="4.00" height="87.5" rx="1.2" fill="#c3c8d1"/>
<rect x="522.48" y="313.5" width="4.00" height="87.5" rx="1.2" fill="#c3c8d1"/>
<rect x="529.04" y="313.5" width="4.00" height="87.5" rx="1.2" fill="#c3c8d1"/>
<rect x="535.60" y="313.5" width="4.00" height="87.5" rx="1.2" fill="#c3c8d1"/>
<rect x="542.15" y="313.5" width="4.00" height="87.5" rx="1.2" fill="#c3c8d1"/>
<rect x="548.71" y="313.5" width="4.00" height="87.5" rx="1.2" fill="#c3c8d1"/>
<rect x="555.26" y="313.5" width="4.00" height="87.5" rx="1.2" fill="#c3c8d1"/>
<rect x="561.82" y="313.5" width="4.00" height="87.5" rx="1.2" fill="#c3c8d1"/>
<rect x="568.38" y="313.5" width="4.00" height="87.5" rx="1.2" fill="#c3c8d1"/>
<rect x="574.93" y="313.5" width="4.00" height="87.5" rx="1.2" fill="#c3c8d1"/>
<rect x="581.49" y="313.5" width="4.00" height="87.5" rx="1.2" fill="#c3c8d1"/>
<rect x="588.04" y="313.5" width="4.00" height="87.5" rx="1.2" fill="#c3c8d1"/>
<rect x="594.60" y="313.5" width="4.00" height="87.5" rx="1.2" fill="#c3c8d1"/>
<rect x="601.15" y="313.5" width="4.00" height="87.5" rx="1.2" fill="#c3c8d1"/>
<rect x="607.71" y="313.5" width="4.00" height="87.5" rx="1.2" fill="#c3c8d1"/>
<rect x="614.27" y="313.5" width="4.00" height="87.5" rx="1.2" fill="#c3c8d1"/>
<rect x="620.82" y="313.5" width="4.00" height="87.5" rx="1.2" fill="#c3c8d1"/>
<rect x="627.38" y="313.5" width="4.00" height="87.5" rx="1.2" fill="#c3c8d1"/>
<line x1="344" y1="333.5" x2="633" y2="333.5" stroke="#50535c" stroke-width="1" stroke-dasharray="2.5,4"/>
<rect x="344" y="341.7" width="289" height="1.2" fill="#3e4149"/>
<rect x="343.35" y="325.5" width="1.7" height="75.5" fill="#12141a"/>
<path d="M344.20,327.7l1.5,2.3l-1.5,1.8l-1.5,-1.8z" fill="#12141a"/>
<rect x="349.91" y="325.5" width="1.7" height="75.5" fill="#12141a"/>
<path d="M350.76,327.7l1.5,2.3l-1.5,1.8l-1.5,-1.8z" fill="#12141a"/>
<rect x="356.46" y="325.5" width="1.7" height="75.5" fill="#12141a"/>
<path d="M357.31,327.7l1.5,2.3l-1.5,1.8l-1.5,-1.8z" fill="#12141a"/>
<rect x="363.02" y="325.5" width="1.7" height="75.5" fill="#12141a"/>
<path d="M363.87,327.7l1.5,2.3l-1.5,1.8l-1.5,-1.8z" fill="#12141a"/>
<rect x="369.57" y="325.5" width="1.7" height="75.5" fill="#12141a"/>
<path d="M370.42,327.7l1.5,2.3l-1.5,1.8l-1.5,-1.8z" fill="#12141a"/>
<rect x="376.13" y="325.5" width="1.7" height="75.5" fill="#12141a"/>
<path d="M376.98,327.7l1.5,2.3l-1.5,1.8l-1.5,-1.8z" fill="#12141a"/>
<rect x="382.68" y="325.5" width="1.7" height="75.5" fill="#12141a"/>
<path d="M383.53,327.7l1.5,2.3l-1.5,1.8l-1.5,-1.8z" fill="#12141a"/>
<rect x="389.24" y="325.5" width="1.7" height="75.5" fill="#12141a"/>
<path d="M390.09,327.7l1.5,2.3l-1.5,1.8l-1.5,-1.8z" fill="#12141a"/>
<rect x="395.80" y="325.5" width="1.7" height="75.5" fill="#12141a"/>
<path d="M396.65,327.7l1.5,2.3l-1.5,1.8l-1.5,-1.8z" fill="#12141a"/>
<rect x="402.35" y="325.5" width="1.7" height="75.5" fill="#12141a"/>
<path d="M403.20,327.7l1.5,2.3l-1.5,1.8l-1.5,-1.8z" fill="#12141a"/>
<rect x="408.91" y="325.5" width="1.7" height="75.5" fill="#12141a"/>
<path d="M409.76,327.7l1.5,2.3l-1.5,1.8l-1.5,-1.8z" fill="#12141a"/>
<rect x="415.46" y="325.5" width="1.7" height="75.5" fill="#12141a"/>
<path d="M416.31,327.7l1.5,2.3l-1.5,1.8l-1.5,-1.8z" fill="#12141a"/>
<rect x="422.02" y="325.5" width="1.7" height="75.5" fill="#12141a"/>
<path d="M422.87,327.7l1.5,2.3l-1.5,1.8l-1.5,-1.8z" fill="#12141a"/>
<rect x="428.58" y="325.5" width="1.7" height="75.5" fill="#12141a"/>
<path d="M429.43,327.7l1.5,2.3l-1.5,1.8l-1.5,-1.8z" fill="#12141a"/>
<rect x="435.13" y="325.5" width="1.7" height="75.5" fill="#12141a"/>
<path d="M435.98,327.7l1.5,2.3l-1.5,1.8l-1.5,-1.8z" fill="#12141a"/>
<rect x="441.69" y="325.5" width="1.7" height="75.5" fill="#12141a"/>
<path d="M442.54,327.7l1.5,2.3l-1.5,1.8l-1.5,-1.8z" fill="#12141a"/>
<rect x="448.24" y="325.5" width="1.7" height="75.5" fill="#12141a"/>
<path d="M449.09,327.7l1.5,2.3l-1.5,1.8l-1.5,-1.8z" fill="#12141a"/>
<rect x="454.80" y="325.5" width="1.7" height="75.5" fill="#12141a"/>
<path d="M455.65,327.7l1.5,2.3l-1.5,1.8l-1.5,-1.8z" fill="#12141a"/>
<rect x="461.35" y="325.5" width="1.7" height="75.5" fill="#12141a"/>
<path d="M462.20,327.7l1.5,2.3l-1.5,1.8l-1.5,-1.8z" fill="#12141a"/>
<rect x="467.91" y="325.5" width="1.7" height="75.5" fill="#12141a"/>
<path d="M468.76,327.7l1.5,2.3l-1.5,1.8l-1.5,-1.8z" fill="#12141a"/>
<rect x="474.47" y="325.5" width="1.7" height="75.5" fill="#12141a"/>
<path d="M475.32,327.7l1.5,2.3l-1.5,1.8l-1.5,-1.8z" fill="#12141a"/>
<rect x="481.02" y="325.5" width="1.7" height="75.5" fill="#12141a"/>
<path d="M481.87,327.7l1.5,2.3l-1.5,1.8l-1.5,-1.8z" fill="#12141a"/>
<rect x="487.58" y="325.5" width="1.7" height="75.5" fill="#12141a"/>
<path d="M488.43,327.7l1.5,2.3l-1.5,1.8l-1.5,-1.8z" fill="#12141a"/>
<rect x="494.13" y="325.5" width="1.7" height="75.5" fill="#12141a"/>
<path d="M494.98,327.7l1.5,2.3l-1.5,1.8l-1.5,-1.8z" fill="#12141a"/>
<rect x="500.69" y="325.5" width="1.7" height="75.5" fill="#12141a"/>
<path d="M501.54,327.7l1.5,2.3l-1.5,1.8l-1.5,-1.8z" fill="#12141a"/>
<rect x="507.25" y="325.5" width="1.7" height="75.5" fill="#12141a"/>
<path d="M508.10,327.7l1.5,2.3l-1.5,1.8l-1.5,-1.8z" fill="#12141a"/>
<rect x="513.80" y="325.5" width="1.7" height="75.5" fill="#12141a"/>
<path d="M514.65,327.7l1.5,2.3l-1.5,1.8l-1.5,-1.8z" fill="#12141a"/>
<rect x="520.36" y="325.5" width="1.7" height="75.5" fill="#12141a"/>
<path d="M521.21,327.7l1.5,2.3l-1.5,1.8l-1.5,-1.8z" fill="#12141a"/>
<rect x="526.91" y="325.5" width="1.7" height="75.5" fill="#12141a"/>
<path d="M527.76,327.7l1.5,2.3l-1.5,1.8l-1.5,-1.8z" fill="#12141a"/>
<rect x="533.47" y="325.5" width="1.7" height="75.5" fill="#12141a"/>
<path d="M534.32,327.7l1.5,2.3l-1.5,1.8l-1.5,-1.8z" fill="#12141a"/>
<rect x="540.02" y="325.5" width="1.7" height="75.5" fill="#12141a"/>
<path d="M540.87,327.7l1.5,2.3l-1.5,1.8l-1.5,-1.8z" fill="#12141a"/>
<rect x="546.58" y="325.5" width="1.7" height="75.5" fill="#12141a"/>
<path d="M547.43,327.7l1.5,2.3l-1.5,1.8l-1.5,-1.8z" fill="#12141a"/>
<rect x="553.14" y="325.5" width="1.7" height="75.5" fill="#12141a"/>
<path d="M553.99,327.7l1.5,2.3l-1.5,1.8l-1.5,-1.8z" fill="#12141a"/>
<rect x="559.69" y="325.5" width="1.7" height="75.5" fill="#12141a"/>
<path d="M560.54,327.7l1.5,2.3l-1.5,1.8l-1.5,-1.8z" fill="#12141a"/>
<rect x="566.25" y="325.5" width="1.7" height="75.5" fill="#12141a"/>
<path d="M567.10,327.7l1.5,2.3l-1.5,1.8l-1.5,-1.8z" fill="#12141a"/>
<rect x="572.80" y="325.5" width="1.7" height="75.5" fill="#12141a"/>
<path d="M573.65,327.7l1.5,2.3l-1.5,1.8l-1.5,-1.8z" fill="#12141a"/>
<rect x="579.36" y="325.5" width="1.7" height="75.5" fill="#12141a"/>
<path d="M580.21,327.7l1.5,2.3l-1.5,1.8l-1.5,-1.8z" fill="#12141a"/>
<rect x="585.92" y="325.5" width="1.7" height="75.5" fill="#12141a"/>
<path d="M586.77,327.7l1.5,2.3l-1.5,1.8l-1.5,-1.8z" fill="#12141a"/>
<rect x="592.47" y="325.5" width="1.7" height="75.5" fill="#12141a"/>
<path d="M593.32,327.7l1.5,2.3l-1.5,1.8l-1.5,-1.8z" fill="#12141a"/>
<rect x="599.03" y="325.5" width="1.7" height="75.5" fill="#12141a"/>
<path d="M599.88,327.7l1.5,2.3l-1.5,1.8l-1.5,-1.8z" fill="#12141a"/>
<rect x="605.58" y="325.5" width="1.7" height="75.5" fill="#12141a"/>
<path d="M606.43,327.7l1.5,2.3l-1.5,1.8l-1.5,-1.8z" fill="#12141a"/>
<rect x="612.14" y="325.5" width="1.7" height="75.5" fill="#12141a"/>
<path d="M612.99,327.7l1.5,2.3l-1.5,1.8l-1.5,-1.8z" fill="#12141a"/>
<rect x="618.69" y="325.5" width="1.7" height="75.5" fill="#12141a"/>
<path d="M619.54,327.7l1.5,2.3l-1.5,1.8l-1.5,-1.8z" fill="#12141a"/>
<rect x="625.25" y="325.5" width="1.7" height="75.5" fill="#12141a"/>
<path d="M626.10,327.7l1.5,2.3l-1.5,1.8l-1.5,-1.8z" fill="#12141a"/><rect x="749" y="313.5" width="289" height="12.0" fill="url(#tipg1)"/>
<rect x="749" y="325.5" width="289" height="75.5" fill="#aeb4c1"/>
<rect x="751.19" y="313.5" width="4.00" height="87.5" rx="1.2" fill="#c3c8d1"/>
<rect x="757.76" y="313.5" width="4.00" height="87.5" rx="1.2" fill="#c3c8d1"/>
<rect x="764.34" y="313.5" width="4.00" height="87.5" rx="1.2" fill="#c3c8d1"/>
<rect x="770.91" y="313.5" width="4.00" height="87.5" rx="1.2" fill="#c3c8d1"/>
<rect x="777.48" y="313.5" width="4.00" height="87.5" rx="1.2" fill="#c3c8d1"/>
<rect x="784.06" y="313.5" width="4.00" height="87.5" rx="1.2" fill="#c3c8d1"/>
<rect x="790.63" y="313.5" width="4.00" height="87.5" rx="1.2" fill="#c3c8d1"/>
<rect x="797.21" y="313.5" width="4.00" height="87.5" rx="1.2" fill="#c3c8d1"/>
<rect x="803.78" y="313.5" width="4.00" height="87.5" rx="1.2" fill="#c3c8d1"/>
<rect x="810.36" y="313.5" width="4.00" height="87.5" rx="1.2" fill="#c3c8d1"/>
<rect x="816.93" y="313.5" width="4.00" height="87.5" rx="1.2" fill="#c3c8d1"/>
<rect x="823.51" y="313.5" width="4.00" height="87.5" rx="1.2" fill="#c3c8d1"/>
<rect x="830.08" y="313.5" width="4.00" height="87.5" rx="1.2" fill="#c3c8d1"/>
<rect x="836.65" y="313.5" width="4.00" height="87.5" rx="1.2" fill="#c3c8d1"/>
<rect x="843.23" y="313.5" width="4.00" height="87.5" rx="1.2" fill="#c3c8d1"/>
<rect x="849.80" y="313.5" width="4.00" height="87.5" rx="1.2" fill="#c3c8d1"/>
<rect x="856.38" y="313.5" width="4.00" height="87.5" rx="1.2" fill="#c3c8d1"/>
<rect x="862.95" y="313.5" width="4.00" height="87.5" rx="1.2" fill="#c3c8d1"/>
<rect x="869.53" y="313.5" width="4.00" height="87.5" rx="1.2" fill="#c3c8d1"/>
<rect x="876.10" y="313.5" width="4.00" height="87.5" rx="1.2" fill="#c3c8d1"/>
<rect x="882.68" y="313.5" width="4.00" height="87.5" rx="1.2" fill="#c3c8d1"/>
<rect x="889.25" y="313.5" width="4.00" height="87.5" rx="1.2" fill="#c3c8d1"/>
<rect x="895.82" y="313.5" width="4.00" height="87.5" rx="1.2" fill="#c3c8d1"/>
<rect x="902.40" y="313.5" width="4.00" height="87.5" rx="1.2" fill="#c3c8d1"/>
<rect x="908.97" y="313.5" width="4.00" height="87.5" rx="1.2" fill="#c3c8d1"/>
<rect x="915.55" y="313.5" width="4.00" height="87.5" rx="1.2" fill="#c3c8d1"/>
<rect x="922.12" y="313.5" width="4.00" height="87.5" rx="1.2" fill="#c3c8d1"/>
<rect x="928.70" y="313.5" width="4.00" height="87.5" rx="1.2" fill="#c3c8d1"/>
<rect x="935.27" y="313.5" width="4.00" height="87.5" rx="1.2" fill="#c3c8d1"/>
<rect x="941.85" y="313.5" width="4.00" height="87.5" rx="1.2" fill="#c3c8d1"/>
<rect x="948.42" y="313.5" width="4.00" height="87.5" rx="1.2" fill="#c3c8d1"/>
<rect x="954.99" y="313.5" width="4.00" height="87.5" rx="1.2" fill="#c3c8d1"/>
<rect x="961.57" y="313.5" width="4.00" height="87.5" rx="1.2" fill="#c3c8d1"/>
<rect x="968.14" y="313.5" width="4.00" height="87.5" rx="1.2" fill="#c3c8d1"/>
<rect x="974.72" y="313.5" width="4.00" height="87.5" rx="1.2" fill="#c3c8d1"/>
<rect x="981.29" y="313.5" width="4.00" height="87.5" rx="1.2" fill="#c3c8d1"/>
<rect x="987.87" y="313.5" width="4.00" height="87.5" rx="1.2" fill="#c3c8d1"/>
<rect x="994.44" y="313.5" width="4.00" height="87.5" rx="1.2" fill="#c3c8d1"/>
<rect x="1001.02" y="313.5" width="4.00" height="87.5" rx="1.2" fill="#c3c8d1"/>
<rect x="1007.59" y="313.5" width="4.00" height="87.5" rx="1.2" fill="#c3c8d1"/>
<rect x="1014.16" y="313.5" width="4.00" height="87.5" rx="1.2" fill="#c3c8d1"/>
<rect x="1020.74" y="313.5" width="4.00" height="87.5" rx="1.2" fill="#c3c8d1"/>
<rect x="1027.31" y="313.5" width="4.00" height="87.5" rx="1.2" fill="#c3c8d1"/>
<rect x="1033.89" y="313.5" width="4.00" height="87.5" rx="1.2" fill="#c3c8d1"/>
<line x1="749" y1="333.5" x2="1038" y2="333.5" stroke="#50535c" stroke-width="1" stroke-dasharray="2.5,4"/>
<rect x="749" y="341.7" width="289" height="1.2" fill="#3e4149"/>
<rect x="749.05" y="325.5" width="1.7" height="75.5" fill="#12141a"/>
<path d="M749.90,327.7l1.5,2.3l-1.5,1.8l-1.5,-1.8z" fill="#12141a"/>
<rect x="755.62" y="325.5" width="1.7" height="75.5" fill="#12141a"/>
<path d="M756.47,327.7l1.5,2.3l-1.5,1.8l-1.5,-1.8z" fill="#12141a"/>
<rect x="762.20" y="325.5" width="1.7" height="75.5" fill="#12141a"/>
<path d="M763.05,327.7l1.5,2.3l-1.5,1.8l-1.5,-1.8z" fill="#12141a"/>
<rect x="768.77" y="325.5" width="1.7" height="75.5" fill="#12141a"/>
<path d="M769.62,327.7l1.5,2.3l-1.5,1.8l-1.5,-1.8z" fill="#12141a"/>
<rect x="775.35" y="325.5" width="1.7" height="75.5" fill="#12141a"/>
<path d="M776.20,327.7l1.5,2.3l-1.5,1.8l-1.5,-1.8z" fill="#12141a"/>
<rect x="781.92" y="325.5" width="1.7" height="75.5" fill="#12141a"/>
<path d="M782.77,327.7l1.5,2.3l-1.5,1.8l-1.5,-1.8z" fill="#12141a"/>
<rect x="788.50" y="325.5" width="1.7" height="75.5" fill="#12141a"/>
<path d="M789.35,327.7l1.5,2.3l-1.5,1.8l-1.5,-1.8z" fill="#12141a"/>
<rect x="795.07" y="325.5" width="1.7" height="75.5" fill="#12141a"/>
<path d="M795.92,327.7l1.5,2.3l-1.5,1.8l-1.5,-1.8z" fill="#12141a"/>
<rect x="801.65" y="325.5" width="1.7" height="75.5" fill="#12141a"/>
<path d="M802.50,327.7l1.5,2.3l-1.5,1.8l-1.5,-1.8z" fill="#12141a"/>
<rect x="808.22" y="325.5" width="1.7" height="75.5" fill="#12141a"/>
<path d="M809.07,327.7l1.5,2.3l-1.5,1.8l-1.5,-1.8z" fill="#12141a"/>
<rect x="814.79" y="325.5" width="1.7" height="75.5" fill="#12141a"/>
<path d="M815.64,327.7l1.5,2.3l-1.5,1.8l-1.5,-1.8z" fill="#12141a"/>
<rect x="821.37" y="325.5" width="1.7" height="75.5" fill="#12141a"/>
<path d="M822.22,327.7l1.5,2.3l-1.5,1.8l-1.5,-1.8z" fill="#12141a"/>
<rect x="827.94" y="325.5" width="1.7" height="75.5" fill="#12141a"/>
<path d="M828.79,327.7l1.5,2.3l-1.5,1.8l-1.5,-1.8z" fill="#12141a"/>
<rect x="834.52" y="325.5" width="1.7" height="75.5" fill="#12141a"/>
<path d="M835.37,327.7l1.5,2.3l-1.5,1.8l-1.5,-1.8z" fill="#12141a"/>
<rect x="841.09" y="325.5" width="1.7" height="75.5" fill="#12141a"/>
<path d="M841.94,327.7l1.5,2.3l-1.5,1.8l-1.5,-1.8z" fill="#12141a"/>
<rect x="847.67" y="325.5" width="1.7" height="75.5" fill="#12141a"/>
<path d="M848.52,327.7l1.5,2.3l-1.5,1.8l-1.5,-1.8z" fill="#12141a"/>
<rect x="854.24" y="325.5" width="1.7" height="75.5" fill="#12141a"/>
<path d="M855.09,327.7l1.5,2.3l-1.5,1.8l-1.5,-1.8z" fill="#12141a"/>
<rect x="860.82" y="325.5" width="1.7" height="75.5" fill="#12141a"/>
<path d="M861.67,327.7l1.5,2.3l-1.5,1.8l-1.5,-1.8z" fill="#12141a"/>
<rect x="867.39" y="325.5" width="1.7" height="75.5" fill="#12141a"/>
<path d="M868.24,327.7l1.5,2.3l-1.5,1.8l-1.5,-1.8z" fill="#12141a"/>
<rect x="873.96" y="325.5" width="1.7" height="75.5" fill="#12141a"/>
<path d="M874.81,327.7l1.5,2.3l-1.5,1.8l-1.5,-1.8z" fill="#12141a"/>
<rect x="880.54" y="325.5" width="1.7" height="75.5" fill="#12141a"/>
<path d="M881.39,327.7l1.5,2.3l-1.5,1.8l-1.5,-1.8z" fill="#12141a"/>
<rect x="887.11" y="325.5" width="1.7" height="75.5" fill="#12141a"/>
<path d="M887.96,327.7l1.5,2.3l-1.5,1.8l-1.5,-1.8z" fill="#12141a"/>
<rect x="893.69" y="325.5" width="1.7" height="75.5" fill="#12141a"/>
<path d="M894.54,327.7l1.5,2.3l-1.5,1.8l-1.5,-1.8z" fill="#12141a"/>
<rect x="900.26" y="325.5" width="1.7" height="75.5" fill="#12141a"/>
<path d="M901.11,327.7l1.5,2.3l-1.5,1.8l-1.5,-1.8z" fill="#12141a"/>
<rect x="906.84" y="325.5" width="1.7" height="75.5" fill="#12141a"/>
<path d="M907.69,327.7l1.5,2.3l-1.5,1.8l-1.5,-1.8z" fill="#12141a"/>
<rect x="913.41" y="325.5" width="1.7" height="75.5" fill="#12141a"/>
<path d="M914.26,327.7l1.5,2.3l-1.5,1.8l-1.5,-1.8z" fill="#12141a"/>
<rect x="919.98" y="325.5" width="1.7" height="75.5" fill="#12141a"/>
<path d="M920.83,327.7l1.5,2.3l-1.5,1.8l-1.5,-1.8z" fill="#12141a"/>
<rect x="926.56" y="325.5" width="1.7" height="75.5" fill="#12141a"/>
<path d="M927.41,327.7l1.5,2.3l-1.5,1.8l-1.5,-1.8z" fill="#12141a"/>
<rect x="933.13" y="325.5" width="1.7" height="75.5" fill="#12141a"/>
<path d="M933.98,327.7l1.5,2.3l-1.5,1.8l-1.5,-1.8z" fill="#12141a"/>
<rect x="939.71" y="325.5" width="1.7" height="75.5" fill="#12141a"/>
<path d="M940.56,327.7l1.5,2.3l-1.5,1.8l-1.5,-1.8z" fill="#12141a"/>
<rect x="946.28" y="325.5" width="1.7" height="75.5" fill="#12141a"/>
<path d="M947.13,327.7l1.5,2.3l-1.5,1.8l-1.5,-1.8z" fill="#12141a"/>
<rect x="952.86" y="325.5" width="1.7" height="75.5" fill="#12141a"/>
<path d="M953.71,327.7l1.5,2.3l-1.5,1.8l-1.5,-1.8z" fill="#12141a"/>
<rect x="959.43" y="325.5" width="1.7" height="75.5" fill="#12141a"/>
<path d="M960.28,327.7l1.5,2.3l-1.5,1.8l-1.5,-1.8z" fill="#12141a"/>
<rect x="966.01" y="325.5" width="1.7" height="75.5" fill="#12141a"/>
<path d="M966.86,327.7l1.5,2.3l-1.5,1.8l-1.5,-1.8z" fill="#12141a"/>
<rect x="972.58" y="325.5" width="1.7" height="75.5" fill="#12141a"/>
<path d="M973.43,327.7l1.5,2.3l-1.5,1.8l-1.5,-1.8z" fill="#12141a"/>
<rect x="979.15" y="325.5" width="1.7" height="75.5" fill="#12141a"/>
<path d="M980.00,327.7l1.5,2.3l-1.5,1.8l-1.5,-1.8z" fill="#12141a"/>
<rect x="985.73" y="325.5" width="1.7" height="75.5" fill="#12141a"/>
<path d="M986.58,327.7l1.5,2.3l-1.5,1.8l-1.5,-1.8z" fill="#12141a"/>
<rect x="992.30" y="325.5" width="1.7" height="75.5" fill="#12141a"/>
<path d="M993.15,327.7l1.5,2.3l-1.5,1.8l-1.5,-1.8z" fill="#12141a"/>
<rect x="998.88" y="325.5" width="1.7" height="75.5" fill="#12141a"/>
<path d="M999.73,327.7l1.5,2.3l-1.5,1.8l-1.5,-1.8z" fill="#12141a"/>
<rect x="1005.45" y="325.5" width="1.7" height="75.5" fill="#12141a"/>
<path d="M1006.30,327.7l1.5,2.3l-1.5,1.8l-1.5,-1.8z" fill="#12141a"/>
<rect x="1012.03" y="325.5" width="1.7" height="75.5" fill="#12141a"/>
<path d="M1012.88,327.7l1.5,2.3l-1.5,1.8l-1.5,-1.8z" fill="#12141a"/>
<rect x="1018.60" y="325.5" width="1.7" height="75.5" fill="#12141a"/>
<path d="M1019.45,327.7l1.5,2.3l-1.5,1.8l-1.5,-1.8z" fill="#12141a"/>
<rect x="1025.18" y="325.5" width="1.7" height="75.5" fill="#12141a"/>
<path d="M1026.03,327.7l1.5,2.3l-1.5,1.8l-1.5,-1.8z" fill="#12141a"/>
<rect x="1031.75" y="325.5" width="1.7" height="75.5" fill="#12141a"/>
<path d="M1032.60,327.7l1.5,2.3l-1.5,1.8l-1.5,-1.8z" fill="#12141a"/><path d="M330.2,327.5 L331.4,325.5 L331.4,315.5 Q334.0,311.0 336.59999999999997,315.5 L336.8,324.5 L337.8,324.5 L338.0,315.5 Q340.59999999999997,311.0 343.2,315.5 L343.2,325.5 L344.2,326.5 L344.2,401 L330.2,401 Z" fill="#d83232"/><rect x="336.2" y="325.5" width="2" height="75.5" fill="#c42828" opacity=".6"/><rect x="330.2" y="401" width="14.0" height="4.600000000000023" fill="#5a2626"/><rect x="330.2" y="341.8" width="14.0" height="1" fill="#a82222"/><path d="M1038,327.5 L1039.2,325.5 L1039.2,315.5 Q1041.8,311.0 1044.4,315.5 L1044.6,324.5 L1045.6,324.5 L1045.8,315.5 Q1048.4,311.0 1051,315.5 L1051,325.5 L1052,326.5 L1052,401 L1038,401 Z" fill="#d83232"/><rect x="1044.0" y="325.5" width="2" height="75.5" fill="#c42828" opacity=".6"/><rect x="1038" y="401" width="14" height="4.600000000000023" fill="#5a2626"/><rect x="1038" y="341.8" width="14" height="1" fill="#a82222"/><rect x="633" y="325.5" width="25" height="16.80000000000001" fill="#dce3ef"/><rect x="633" y="342.3" width="15" height="58.69999999999999" fill="#c6c6c8"/><rect x="633" y="342.3" width="15" height="5" fill="#505257"/><rect x="648" y="342.3" width="10" height="58.69999999999999" fill="#e1e7f1"/><rect x="723.4" y="325.5" width="25.600000000000023" height="16.80000000000001" fill="#dce3ef"/><rect x="735" y="342.3" width="14" height="58.69999999999999" fill="#c6c6c8"/><rect x="735" y="342.3" width="14" height="5" fill="#505257"/><rect x="723.4" y="342.3" width="11.600000000000023" height="58.69999999999999" fill="#e1e7f1"/><rect x="633" y="341.7" width="116" height="1.2" fill="#3e4149"/><rect x="658" y="326.5" width="18" height="74.5" fill="#d2d5dc"/><rect x="706.2" y="326.5" width="17.199999999999932" height="74.5" fill="#d2d5dc"/><rect x="658.7" y="325.5" width="1.6" height="75.5" fill="#15171c"/><rect x="660.0" y="313.5" width="3" height="12.0" fill="#a8adb6" opacity=".8"/><rect x="716.9000000000001" y="325.5" width="1.6" height="75.5" fill="#15171c"/><rect x="718.2" y="313.5" width="3" height="12.0" fill="#a8adb6" opacity=".8"/><rect x="676" y="309.5" width="30.200000000000045" height="91.5" fill="#f4f4f4"/><rect x="682" y="309.5" width="18.200000000000045" height="5.5" fill="#7f7f7f"/><rect x="676" y="319.5" width="6" height="1.2" fill="#9a9a9a"/><rect x="700.2" y="319.5" width="6" height="1.2" fill="#9a9a9a"/><rect x="680" y="378" width="2" height="23" fill="#a0a0a0"/><rect x="700.2" y="378" width="2" height="23" fill="#a0a0a0"/><rect x="678" y="395" width="26.200000000000045" height="6" fill="#dcdcdc"/><rect x="670" y="309.5" width="6" height="91.5" fill="#0e0e0e"/><rect x="706.2" y="309.5" width="6" height="91.5" fill="#0e0e0e"/><path d="M341.5,392 V411 H349.5" fill="none" stroke="#c98080" stroke-width="1"/><path d="M341.5,392 V400" stroke="#3f5fb0" stroke-width="1"/><path d="M339.0,398 L342.0,402.5 L345.0,398 M342.0,402.5 V405" fill="none" stroke="#9ac040" stroke-width="1"/><path d="M349.0,420 l7,7 m0,-7 l-7,7" stroke="#b82828" stroke-width="1.4"/></svg>
<div class="t" style="left:322.0px;top:285.4px;font-size:11.5px;color:#b3b3b3;font-family:'Liberation Serif',serif;font-weight:bold;">Front</div>
<svg class="a" style="left:312px;top:483px" width="759" height="169" viewBox="312 483 759 169"><defs><linearGradient id="g2" x1="0" y1="0" x2="0" y2="1"><stop offset="0" stop-color="#6c6c6c"/><stop offset="0.25" stop-color="#808080"/><stop offset="0.5" stop-color="#a8a8a8"/><stop offset="0.78" stop-color="#dcdcdc"/><stop offset="1" stop-color="#fbfbfb"/></linearGradient><linearGradient id="tipg2" x1="0" y1="0" x2="0" y2="1"><stop offset="0" stop-color="#8e9096"/><stop offset="1" stop-color="#a2a7b1"/></linearGradient></defs><rect x="312" y="483" width="759" height="169" fill="url(#g2)"/><rect x="312.5" y="483.5" width="758" height="168" fill="none" stroke="#d4d4d4"/><rect x="330" y="612" width="722" height="5" fill="#3c3c3e"/><rect x="330" y="521.3" width="306.6" height="13.0" fill="url(#tipg2)"/>
<rect x="330" y="534.3" width="306.6" height="77.70000000000005" fill="#aeb4c1"/>
<rect x="331.91" y="521.3" width="4.00" height="90.70000000000005" rx="1.2" fill="#c3c8d1"/>
<rect x="338.72" y="521.3" width="4.00" height="90.70000000000005" rx="1.2" fill="#c3c8d1"/>
<rect x="345.53" y="521.3" width="4.00" height="90.70000000000005" rx="1.2" fill="#c3c8d1"/>
<rect x="352.35" y="521.3" width="4.00" height="90.70000000000005" rx="1.2" fill="#c3c8d1"/>
<rect x="359.16" y="521.3" width="4.00" height="90.70000000000005" rx="1.2" fill="#c3c8d1"/>
<rect x="365.98" y="521.3" width="4.00" height="90.70000000000005" rx="1.2" fill="#c3c8d1"/>
<rect x="372.79" y="521.3" width="4.00" height="90.70000000000005" rx="1.2" fill="#c3c8d1"/>
<rect x="379.60" y="521.3" width="4.00" height="90.70000000000005" rx="1.2" fill="#c3c8d1"/>
<rect x="386.42" y="521.3" width="4.00" height="90.70000000000005" rx="1.2" fill="#c3c8d1"/>
<rect x="393.23" y="521.3" width="4.00" height="90.70000000000005" rx="1.2" fill="#c3c8d1"/>
<rect x="400.04" y="521.3" width="4.00" height="90.70000000000005" rx="1.2" fill="#c3c8d1"/>
<rect x="406.86" y="521.3" width="4.00" height="90.70000000000005" rx="1.2" fill="#c3c8d1"/>
<rect x="413.67" y="521.3" width="4.00" height="90.70000000000005" rx="1.2" fill="#c3c8d1"/>
<rect x="420.48" y="521.3" width="4.00" height="90.70000000000005" rx="1.2" fill="#c3c8d1"/>
<rect x="427.30" y="521.3" width="4.00" height="90.70000000000005" rx="1.2" fill="#c3c8d1"/>
<rect x="434.11" y="521.3" width="4.00" height="90.70000000000005" rx="1.2" fill="#c3c8d1"/>
<rect x="440.92" y="521.3" width="4.00" height="90.70000000000005" rx="1.2" fill="#c3c8d1"/>
<rect x="447.74" y="521.3" width="4.00" height="90.70000000000005" rx="1.2" fill="#c3c8d1"/>
<rect x="454.55" y="521.3" width="4.00" height="90.70000000000005" rx="1.2" fill="#c3c8d1"/>
<rect x="461.37" y="521.3" width="4.00" height="90.70000000000005" rx="1.2" fill="#c3c8d1"/>
<rect x="468.18" y="521.3" width="4.00" height="90.70000000000005" rx="1.2" fill="#c3c8d1"/>
<rect x="474.99" y="521.3" width="4.00" height="90.70000000000005" rx="1.2" fill="#c3c8d1"/>
<rect x="481.81" y="521.3" width="4.00" height="90.70000000000005" rx="1.2" fill="#c3c8d1"/>
<rect x="488.62" y="521.3" width="4.00" height="90.70000000000005" rx="1.2" fill="#c3c8d1"/>
<rect x="495.43" y="521.3" width="4.00" height="90.70000000000005" rx="1.2" fill="#c3c8d1"/>
<rect x="502.25" y="521.3" width="4.00" height="90.70000000000005" rx="1.2" fill="#c3c8d1"/>
<rect x="509.06" y="521.3" width="4.00" height="90.70000000000005" rx="1.2" fill="#c3c8d1"/>
<rect x="515.88" y="521.3" width="4.00" height="90.70000000000005" rx="1.2" fill="#c3c8d1"/>
<rect x="522.69" y="521.3" width="4.00" height="90.70000000000005" rx="1.2" fill="#c3c8d1"/>
<rect x="529.50" y="521.3" width="4.00" height="90.70000000000005" rx="1.2" fill="#c3c8d1"/>
<rect x="536.32" y="521.3" width="4.00" height="90.70000000000005" rx="1.2" fill="#c3c8d1"/>
<rect x="543.13" y="521.3" width="4.00" height="90.70000000000005" rx="1.2" fill="#c3c8d1"/>
<rect x="549.94" y="521.3" width="4.00" height="90.70000000000005" rx="1.2" fill="#c3c8d1"/>
<rect x="556.76" y="521.3" width="4.00" height="90.70000000000005" rx="1.2" fill="#c3c8d1"/>
<rect x="563.57" y="521.3" width="4.00" height="90.70000000000005" rx="1.2" fill="#c3c8d1"/>
<rect x="570.38" y="521.3" width="4.00" height="90.70000000000005" rx="1.2" fill="#c3c8d1"/>
<rect x="577.20" y="521.3" width="4.00" height="90.70000000000005" rx="1.2" fill="#c3c8d1"/>
<rect x="584.01" y="521.3" width="4.00" height="90.70000000000005" rx="1.2" fill="#c3c8d1"/>
<rect x="590.83" y="521.3" width="4.00" height="90.70000000000005" rx="1.2" fill="#c3c8d1"/>
<rect x="597.64" y="521.3" width="4.00" height="90.70000000000005" rx="1.2" fill="#c3c8d1"/>
<rect x="604.45" y="521.3" width="4.00" height="90.70000000000005" rx="1.2" fill="#c3c8d1"/>
<rect x="611.27" y="521.3" width="4.00" height="90.70000000000005" rx="1.2" fill="#c3c8d1"/>
<rect x="618.08" y="521.3" width="4.00" height="90.70000000000005" rx="1.2" fill="#c3c8d1"/>
<rect x="624.89" y="521.3" width="4.00" height="90.70000000000005" rx="1.2" fill="#c3c8d1"/>
<rect x="631.71" y="521.3" width="4.00" height="90.70000000000005" rx="1.2" fill="#c3c8d1"/>
<line x1="330" y1="542.3" x2="636.6" y2="542.3" stroke="#50535c" stroke-width="1" stroke-dasharray="2.5,4"/>
<rect x="330" y="550.4" width="306.6" height="1.2" fill="#3e4149"/>
<rect x="329.65" y="534.3" width="1.7" height="77.70000000000005" fill="#12141a"/>
<path d="M330.50,536.5l1.5,2.3l-1.5,1.8l-1.5,-1.8z" fill="#12141a"/>
<rect x="336.46" y="534.3" width="1.7" height="77.70000000000005" fill="#12141a"/>
<path d="M337.31,536.5l1.5,2.3l-1.5,1.8l-1.5,-1.8z" fill="#12141a"/>
<rect x="343.28" y="534.3" width="1.7" height="77.70000000000005" fill="#12141a"/>
<path d="M344.13,536.5l1.5,2.3l-1.5,1.8l-1.5,-1.8z" fill="#12141a"/>
<rect x="350.09" y="534.3" width="1.7" height="77.70000000000005" fill="#12141a"/>
<path d="M350.94,536.5l1.5,2.3l-1.5,1.8l-1.5,-1.8z" fill="#12141a"/>
<rect x="356.90" y="534.3" width="1.7" height="77.70000000000005" fill="#12141a"/>
<path d="M357.75,536.5l1.5,2.3l-1.5,1.8l-1.5,-1.8z" fill="#12141a"/>
<rect x="363.72" y="534.3" width="1.7" height="77.70000000000005" fill="#12141a"/>
<path d="M364.57,536.5l1.5,2.3l-1.5,1.8l-1.5,-1.8z" fill="#12141a"/>
<rect x="370.53" y="534.3" width="1.7" height="77.70000000000005" fill="#12141a"/>
<path d="M371.38,536.5l1.5,2.3l-1.5,1.8l-1.5,-1.8z" fill="#12141a"/>
<rect x="377.35" y="534.3" width="1.7" height="77.70000000000005" fill="#12141a"/>
<path d="M378.20,536.5l1.5,2.3l-1.5,1.8l-1.5,-1.8z" fill="#12141a"/>
<rect x="384.16" y="534.3" width="1.7" height="77.70000000000005" fill="#12141a"/>
<path d="M385.01,536.5l1.5,2.3l-1.5,1.8l-1.5,-1.8z" fill="#12141a"/>
<rect x="390.97" y="534.3" width="1.7" height="77.70000000000005" fill="#12141a"/>
<path d="M391.82,536.5l1.5,2.3l-1.5,1.8l-1.5,-1.8z" fill="#12141a"/>
<rect x="397.79" y="534.3" width="1.7" height="77.70000000000005" fill="#12141a"/>
<path d="M398.64,536.5l1.5,2.3l-1.5,1.8l-1.5,-1.8z" fill="#12141a"/>
<rect x="404.60" y="534.3" width="1.7" height="77.70000000000005" fill="#12141a"/>
<path d="M405.45,536.5l1.5,2.3l-1.5,1.8l-1.5,-1.8z" fill="#12141a"/>
<rect x="411.41" y="534.3" width="1.7" height="77.70000000000005" fill="#12141a"/>
<path d="M412.26,536.5l1.5,2.3l-1.5,1.8l-1.5,-1.8z" fill="#12141a"/>
<rect x="418.23" y="534.3" width="1.7" height="77.70000000000005" fill="#12141a"/>
<path d="M419.08,536.5l1.5,2.3l-1.5,1.8l-1.5,-1.8z" fill="#12141a"/>
<rect x="425.04" y="534.3" width="1.7" height="77.70000000000005" fill="#12141a"/>
<path d="M425.89,536.5l1.5,2.3l-1.5,1.8l-1.5,-1.8z" fill="#12141a"/>
<rect x="431.85" y="534.3" width="1.7" height="77.70000000000005" fill="#12141a"/>
<path d="M432.70,536.5l1.5,2.3l-1.5,1.8l-1.5,-1.8z" fill="#12141a"/>
<rect x="438.67" y="534.3" width="1.7" height="77.70000000000005" fill="#12141a"/>
<path d="M439.52,536.5l1.5,2.3l-1.5,1.8l-1.5,-1.8z" fill="#12141a"/>
<rect x="445.48" y="534.3" width="1.7" height="77.70000000000005" fill="#12141a"/>
<path d="M446.33,536.5l1.5,2.3l-1.5,1.8l-1.5,-1.8z" fill="#12141a"/>
<rect x="452.30" y="534.3" width="1.7" height="77.70000000000005" fill="#12141a"/>
<path d="M453.15,536.5l1.5,2.3l-1.5,1.8l-1.5,-1.8z" fill="#12141a"/>
<rect x="459.11" y="534.3" width="1.7" height="77.70000000000005" fill="#12141a"/>
<path d="M459.96,536.5l1.5,2.3l-1.5,1.8l-1.5,-1.8z" fill="#12141a"/>
<rect x="465.92" y="534.3" width="1.7" height="77.70000000000005" fill="#12141a"/>
<path d="M466.77,536.5l1.5,2.3l-1.5,1.8l-1.5,-1.8z" fill="#12141a"/>
<rect x="472.74" y="534.3" width="1.7" height="77.70000000000005" fill="#12141a"/>
<path d="M473.59,536.5l1.5,2.3l-1.5,1.8l-1.5,-1.8z" fill="#12141a"/>
<rect x="479.55" y="534.3" width="1.7" height="77.70000000000005" fill="#12141a"/>
<path d="M480.40,536.5l1.5,2.3l-1.5,1.8l-1.5,-1.8z" fill="#12141a"/>
<rect x="486.36" y="534.3" width="1.7" height="77.70000000000005" fill="#12141a"/>
<path d="M487.21,536.5l1.5,2.3l-1.5,1.8l-1.5,-1.8z" fill="#12141a"/>
<rect x="493.18" y="534.3" width="1.7" height="77.70000000000005" fill="#12141a"/>
<path d="M494.03,536.5l1.5,2.3l-1.5,1.8l-1.5,-1.8z" fill="#12141a"/>
<rect x="499.99" y="534.3" width="1.7" height="77.70000000000005" fill="#12141a"/>
<path d="M500.84,536.5l1.5,2.3l-1.5,1.8l-1.5,-1.8z" fill="#12141a"/>
<rect x="506.80" y="534.3" width="1.7" height="77.70000000000005" fill="#12141a"/>
<path d="M507.65,536.5l1.5,2.3l-1.5,1.8l-1.5,-1.8z" fill="#12141a"/>
<rect x="513.62" y="534.3" width="1.7" height="77.70000000000005" fill="#12141a"/>
<path d="M514.47,536.5l1.5,2.3l-1.5,1.8l-1.5,-1.8z" fill="#12141a"/>
<rect x="520.43" y="534.3" width="1.7" height="77.70000000000005" fill="#12141a"/>
<path d="M521.28,536.5l1.5,2.3l-1.5,1.8l-1.5,-1.8z" fill="#12141a"/>
<rect x="527.25" y="534.3" width="1.7" height="77.70000000000005" fill="#12141a"/>
<path d="M528.10,536.5l1.5,2.3l-1.5,1.8l-1.5,-1.8z" fill="#12141a"/>
<rect x="534.06" y="534.3" width="1.7" height="77.70000000000005" fill="#12141a"/>
<path d="M534.91,536.5l1.5,2.3l-1.5,1.8l-1.5,-1.8z" fill="#12141a"/>
<rect x="540.87" y="534.3" width="1.7" height="77.70000000000005" fill="#12141a"/>
<path d="M541.72,536.5l1.5,2.3l-1.5,1.8l-1.5,-1.8z" fill="#12141a"/>
<rect x="547.69" y="534.3" width="1.7" height="77.70000000000005" fill="#12141a"/>
<path d="M548.54,536.5l1.5,2.3l-1.5,1.8l-1.5,-1.8z" fill="#12141a"/>
<rect x="554.50" y="534.3" width="1.7" height="77.70000000000005" fill="#12141a"/>
<path d="M555.35,536.5l1.5,2.3l-1.5,1.8l-1.5,-1.8z" fill="#12141a"/>
<rect x="561.31" y="534.3" width="1.7" height="77.70000000000005" fill="#12141a"/>
<path d="M562.16,536.5l1.5,2.3l-1.5,1.8l-1.5,-1.8z" fill="#12141a"/>
<rect x="568.13" y="534.3" width="1.7" height="77.70000000000005" fill="#12141a"/>
<path d="M568.98,536.5l1.5,2.3l-1.5,1.8l-1.5,-1.8z" fill="#12141a"/>
<rect x="574.94" y="534.3" width="1.7" height="77.70000000000005" fill="#12141a"/>
<path d="M575.79,536.5l1.5,2.3l-1.5,1.8l-1.5,-1.8z" fill="#12141a"/>
<rect x="581.75" y="534.3" width="1.7" height="77.70000000000005" fill="#12141a"/>
<path d="M582.60,536.5l1.5,2.3l-1.5,1.8l-1.5,-1.8z" fill="#12141a"/>
<rect x="588.57" y="534.3" width="1.7" height="77.70000000000005" fill="#12141a"/>
<path d="M589.42,536.5l1.5,2.3l-1.5,1.8l-1.5,-1.8z" fill="#12141a"/>
<rect x="595.38" y="534.3" width="1.7" height="77.70000000000005" fill="#12141a"/>
<path d="M596.23,536.5l1.5,2.3l-1.5,1.8l-1.5,-1.8z" fill="#12141a"/>
<rect x="602.20" y="534.3" width="1.7" height="77.70000000000005" fill="#12141a"/>
<path d="M603.05,536.5l1.5,2.3l-1.5,1.8l-1.5,-1.8z" fill="#12141a"/>
<rect x="609.01" y="534.3" width="1.7" height="77.70000000000005" fill="#12141a"/>
<path d="M609.86,536.5l1.5,2.3l-1.5,1.8l-1.5,-1.8z" fill="#12141a"/>
<rect x="615.82" y="534.3" width="1.7" height="77.70000000000005" fill="#12141a"/>
<path d="M616.67,536.5l1.5,2.3l-1.5,1.8l-1.5,-1.8z" fill="#12141a"/>
<rect x="622.64" y="534.3" width="1.7" height="77.70000000000005" fill="#12141a"/>
<path d="M623.49,536.5l1.5,2.3l-1.5,1.8l-1.5,-1.8z" fill="#12141a"/>
<rect x="629.45" y="534.3" width="1.7" height="77.70000000000005" fill="#12141a"/>
<path d="M630.30,536.5l1.5,2.3l-1.5,1.8l-1.5,-1.8z" fill="#12141a"/><rect x="745.2" y="521.3" width="306.79999999999995" height="13.0" fill="url(#tipg2)"/>
<rect x="745.2" y="534.3" width="306.79999999999995" height="77.70000000000005" fill="#aeb4c1"/>
<rect x="746.91" y="521.3" width="4.00" height="90.70000000000005" rx="1.2" fill="#c3c8d1"/>
<rect x="753.72" y="521.3" width="4.00" height="90.70000000000005" rx="1.2" fill="#c3c8d1"/>
<rect x="760.53" y="521.3" width="4.00" height="90.70000000000005" rx="1.2" fill="#c3c8d1"/>
<rect x="767.35" y="521.3" width="4.00" height="90.70000000000005" rx="1.2" fill="#c3c8d1"/>
<rect x="774.16" y="521.3" width="4.00" height="90.70000000000005" rx="1.2" fill="#c3c8d1"/>
<rect x="780.98" y="521.3" width="4.00" height="90.70000000000005" rx="1.2" fill="#c3c8d1"/>
<rect x="787.79" y="521.3" width="4.00" height="90.70000000000005" rx="1.2" fill="#c3c8d1"/>
<rect x="794.60" y="521.3" width="4.00" height="90.70000000000005" rx="1.2" fill="#c3c8d1"/>
<rect x="801.42" y="521.3" width="4.00" height="90.70000000000005" rx="1.2" fill="#c3c8d1"/>
<rect x="808.23" y="521.3" width="4.00" height="90.70000000000005" rx="1.2" fill="#c3c8d1"/>
<rect x="815.04" y="521.3" width="4.00" height="90.70000000000005" rx="1.2" fill="#c3c8d1"/>
<rect x="821.86" y="521.3" width="4.00" height="90.70000000000005" rx="1.2" fill="#c3c8d1"/>
<rect x="828.67" y="521.3" width="4.00" height="90.70000000000005" rx="1.2" fill="#c3c8d1"/>
<rect x="835.48" y="521.3" width="4.00" height="90.70000000000005" rx="1.2" fill="#c3c8d1"/>
<rect x="842.30" y="521.3" width="4.00" height="90.70000000000005" rx="1.2" fill="#c3c8d1"/>
<rect x="849.11" y="521.3" width="4.00" height="90.70000000000005" rx="1.2" fill="#c3c8d1"/>
<rect x="855.92" y="521.3" width="4.00" height="90.70000000000005" rx="1.2" fill="#c3c8d1"/>
<rect x="862.74" y="521.3" width="4.00" height="90.70000000000005" rx="1.2" fill="#c3c8d1"/>
<rect x="869.55" y="521.3" width="4.00" height="90.70000000000005" rx="1.2" fill="#c3c8d1"/>
<rect x="876.37" y="521.3" width="4.00" height="90.70000000000005" rx="1.2" fill="#c3c8d1"/>
<rect x="883.18" y="521.3" width="4.00" height="90.70000000000005" rx="1.2" fill="#c3c8d1"/>
<rect x="889.99" y="521.3" width="4.00" height="90.70000000000005" rx="1.2" fill="#c3c8d1"/>
<rect x="896.81" y="521.3" width="4.00" height="90.70000000000005" rx="1.2" fill="#c3c8d1"/>
<rect x="903.62" y="521.3" width="4.00" height="90.70000000000005" rx="1.2" fill="#c3c8d1"/>
<rect x="910.43" y="521.3" width="4.00" height="90.70000000000005" rx="1.2" fill="#c3c8d1"/>
<rect x="917.25" y="521.3" width="4.00" height="90.70000000000005" rx="1.2" fill="#c3c8d1"/>
<rect x="924.06" y="521.3" width="4.00" height="90.70000000000005" rx="1.2" fill="#c3c8d1"/>
<rect x="930.88" y="521.3" width="4.00" height="90.70000000000005" rx="1.2" fill="#c3c8d1"/>
<rect x="937.69" y="521.3" width="4.00" height="90.70000000000005" rx="1.2" fill="#c3c8d1"/>
<rect x="944.50" y="521.3" width="4.00" height="90.70000000000005" rx="1.2" fill="#c3c8d1"/>
<rect x="951.32" y="521.3" width="4.00" height="90.70000000000005" rx="1.2" fill="#c3c8d1"/>
<rect x="958.13" y="521.3" width="4.00" height="90.70000000000005" rx="1.2" fill="#c3c8d1"/>
<rect x="964.94" y="521.3" width="4.00" height="90.70000000000005" rx="1.2" fill="#c3c8d1"/>
<rect x="971.76" y="521.3" width="4.00" height="90.70000000000005" rx="1.2" fill="#c3c8d1"/>
<rect x="978.57" y="521.3" width="4.00" height="90.70000000000005" rx="1.2" fill="#c3c8d1"/>
<rect x="985.38" y="521.3" width="4.00" height="90.70000000000005" rx="1.2" fill="#c3c8d1"/>
<rect x="992.20" y="521.3" width="4.00" height="90.70000000000005" rx="1.2" fill="#c3c8d1"/>
<rect x="999.01" y="521.3" width="4.00" height="90.70000000000005" rx="1.2" fill="#c3c8d1"/>
<rect x="1005.83" y="521.3" width="4.00" height="90.70000000000005" rx="1.2" fill="#c3c8d1"/>
<rect x="1012.64" y="521.3" width="4.00" height="90.70000000000005" rx="1.2" fill="#c3c8d1"/>
<rect x="1019.45" y="521.3" width="4.00" height="90.70000000000005" rx="1.2" fill="#c3c8d1"/>
<rect x="1026.27" y="521.3" width="4.00" height="90.70000000000005" rx="1.2" fill="#c3c8d1"/>
<rect x="1033.08" y="521.3" width="4.00" height="90.70000000000005" rx="1.2" fill="#c3c8d1"/>
<rect x="1039.89" y="521.3" width="4.00" height="90.70000000000005" rx="1.2" fill="#c3c8d1"/>
<rect x="1046.71" y="521.3" width="4.00" height="90.70000000000005" rx="1.2" fill="#c3c8d1"/>
<line x1="745.2" y1="542.3" x2="1052" y2="542.3" stroke="#50535c" stroke-width="1" stroke-dasharray="2.5,4"/>
<rect x="745.2" y="550.4" width="306.79999999999995" height="1.2" fill="#3e4149"/>
<rect x="744.65" y="534.3" width="1.7" height="77.70000000000005" fill="#12141a"/>
<path d="M745.50,536.5l1.5,2.3l-1.5,1.8l-1.5,-1.8z" fill="#12141a"/>
<rect x="751.46" y="534.3" width="1.7" height="77.70000000000005" fill="#12141a"/>
<path d="M752.31,536.5l1.5,2.3l-1.5,1.8l-1.5,-1.8z" fill="#12141a"/>
<rect x="758.28" y="534.3" width="1.7" height="77.70000000000005" fill="#12141a"/>
<path d="M759.13,536.5l1.5,2.3l-1.5,1.8l-1.5,-1.8z" fill="#12141a"/>
<rect x="765.09" y="534.3" width="1.7" height="77.70000000000005" fill="#12141a"/>
<path d="M765.94,536.5l1.5,2.3l-1.5,1.8l-1.5,-1.8z" fill="#12141a"/>
<rect x="771.90" y="534.3" width="1.7" height="77.70000000000005" fill="#12141a"/>
<path d="M772.75,536.5l1.5,2.3l-1.5,1.8l-1.5,-1.8z" fill="#12141a"/>
<rect x="778.72" y="534.3" width="1.7" height="77.70000000000005" fill="#12141a"/>
<path d="M779.57,536.5l1.5,2.3l-1.5,1.8l-1.5,-1.8z" fill="#12141a"/>
<rect x="785.53" y="534.3" width="1.7" height="77.70000000000005" fill="#12141a"/>
<path d="M786.38,536.5l1.5,2.3l-1.5,1.8l-1.5,-1.8z" fill="#12141a"/>
<rect x="792.35" y="534.3" width="1.7" height="77.70000000000005" fill="#12141a"/>
<path d="M793.20,536.5l1.5,2.3l-1.5,1.8l-1.5,-1.8z" fill="#12141a"/>
<rect x="799.16" y="534.3" width="1.7" height="77.70000000000005" fill="#12141a"/>
<path d="M800.01,536.5l1.5,2.3l-1.5,1.8l-1.5,-1.8z" fill="#12141a"/>
<rect x="805.97" y="534.3" width="1.7" height="77.70000000000005" fill="#12141a"/>
<path d="M806.82,536.5l1.5,2.3l-1.5,1.8l-1.5,-1.8z" fill="#12141a"/>
<rect x="812.79" y="534.3" width="1.7" height="77.70000000000005" fill="#12141a"/>
<path d="M813.64,536.5l1.5,2.3l-1.5,1.8l-1.5,-1.8z" fill="#12141a"/>
<rect x="819.60" y="534.3" width="1.7" height="77.70000000000005" fill="#12141a"/>
<path d="M820.45,536.5l1.5,2.3l-1.5,1.8l-1.5,-1.8z" fill="#12141a"/>
<rect x="826.41" y="534.3" width="1.7" height="77.70000000000005" fill="#12141a"/>
<path d="M827.26,536.5l1.5,2.3l-1.5,1.8l-1.5,-1.8z" fill="#12141a"/>
<rect x="833.23" y="534.3" width="1.7" height="77.70000000000005" fill="#12141a"/>
<path d="M834.08,536.5l1.5,2.3l-1.5,1.8l-1.5,-1.8z" fill="#12141a"/>
<rect x="840.04" y="534.3" width="1.7" height="77.70000000000005" fill="#12141a"/>
<path d="M840.89,536.5l1.5,2.3l-1.5,1.8l-1.5,-1.8z" fill="#12141a"/>
<rect x="846.85" y="534.3" width="1.7" height="77.70000000000005" fill="#12141a"/>
<path d="M847.70,536.5l1.5,2.3l-1.5,1.8l-1.5,-1.8z" fill="#12141a"/>
<rect x="853.67" y="534.3" width="1.7" height="77.70000000000005" fill="#12141a"/>
<path d="M854.52,536.5l1.5,2.3l-1.5,1.8l-1.5,-1.8z" fill="#12141a"/>
<rect x="860.48" y="534.3" width="1.7" height="77.70000000000005" fill="#12141a"/>
<path d="M861.33,536.5l1.5,2.3l-1.5,1.8l-1.5,-1.8z" fill="#12141a"/>
<rect x="867.30" y="534.3" width="1.7" height="77.70000000000005" fill="#12141a"/>
<path d="M868.15,536.5l1.5,2.3l-1.5,1.8l-1.5,-1.8z" fill="#12141a"/>
<rect x="874.11" y="534.3" width="1.7" height="77.70000000000005" fill="#12141a"/>
<path d="M874.96,536.5l1.5,2.3l-1.5,1.8l-1.5,-1.8z" fill="#12141a"/>
<rect x="880.92" y="534.3" width="1.7" height="77.70000000000005" fill="#12141a"/>
<path d="M881.77,536.5l1.5,2.3l-1.5,1.8l-1.5,-1.8z" fill="#12141a"/>
<rect x="887.74" y="534.3" width="1.7" height="77.70000000000005" fill="#12141a"/>
<path d="M888.59,536.5l1.5,2.3l-1.5,1.8l-1.5,-1.8z" fill="#12141a"/>
<rect x="894.55" y="534.3" width="1.7" height="77.70000000000005" fill="#12141a"/>
<path d="M895.40,536.5l1.5,2.3l-1.5,1.8l-1.5,-1.8z" fill="#12141a"/>
<rect x="901.36" y="534.3" width="1.7" height="77.70000000000005" fill="#12141a"/>
<path d="M902.21,536.5l1.5,2.3l-1.5,1.8l-1.5,-1.8z" fill="#12141a"/>
<rect x="908.18" y="534.3" width="1.7" height="77.70000000000005" fill="#12141a"/>
<path d="M909.03,536.5l1.5,2.3l-1.5,1.8l-1.5,-1.8z" fill="#12141a"/>
<rect x="914.99" y="534.3" width="1.7" height="77.70000000000005" fill="#12141a"/>
<path d="M915.84,536.5l1.5,2.3l-1.5,1.8l-1.5,-1.8z" fill="#12141a"/>
<rect x="921.80" y="534.3" width="1.7" height="77.70000000000005" fill="#12141a"/>
<path d="M922.65,536.5l1.5,2.3l-1.5,1.8l-1.5,-1.8z" fill="#12141a"/>
<rect x="928.62" y="534.3" width="1.7" height="77.70000000000005" fill="#12141a"/>
<path d="M929.47,536.5l1.5,2.3l-1.5,1.8l-1.5,-1.8z" fill="#12141a"/>
<rect x="935.43" y="534.3" width="1.7" height="77.70000000000005" fill="#12141a"/>
<path d="M936.28,536.5l1.5,2.3l-1.5,1.8l-1.5,-1.8z" fill="#12141a"/>
<rect x="942.25" y="534.3" width="1.7" height="77.70000000000005" fill="#12141a"/>
<path d="M943.10,536.5l1.5,2.3l-1.5,1.8l-1.5,-1.8z" fill="#12141a"/>
<rect x="949.06" y="534.3" width="1.7" height="77.70000000000005" fill="#12141a"/>
<path d="M949.91,536.5l1.5,2.3l-1.5,1.8l-1.5,-1.8z" fill="#12141a"/>
<rect x="955.87" y="534.3" width="1.7" height="77.70000000000005" fill="#12141a"/>
<path d="M956.72,536.5l1.5,2.3l-1.5,1.8l-1.5,-1.8z" fill="#12141a"/>
<rect x="962.69" y="534.3" width="1.7" height="77.70000000000005" fill="#12141a"/>
<path d="M963.54,536.5l1.5,2.3l-1.5,1.8l-1.5,-1.8z" fill="#12141a"/>
<rect x="969.50" y="534.3" width="1.7" height="77.70000000000005" fill="#12141a"/>
<path d="M970.35,536.5l1.5,2.3l-1.5,1.8l-1.5,-1.8z" fill="#12141a"/>
<rect x="976.31" y="534.3" width="1.7" height="77.70000000000005" fill="#12141a"/>
<path d="M977.16,536.5l1.5,2.3l-1.5,1.8l-1.5,-1.8z" fill="#12141a"/>
<rect x="983.13" y="534.3" width="1.7" height="77.70000000000005" fill="#12141a"/>
<path d="M983.98,536.5l1.5,2.3l-1.5,1.8l-1.5,-1.8z" fill="#12141a"/>
<rect x="989.94" y="534.3" width="1.7" height="77.70000000000005" fill="#12141a"/>
<path d="M990.79,536.5l1.5,2.3l-1.5,1.8l-1.5,-1.8z" fill="#12141a"/>
<rect x="996.75" y="534.3" width="1.7" height="77.70000000000005" fill="#12141a"/>
<path d="M997.60,536.5l1.5,2.3l-1.5,1.8l-1.5,-1.8z" fill="#12141a"/>
<rect x="1003.57" y="534.3" width="1.7" height="77.70000000000005" fill="#12141a"/>
<path d="M1004.42,536.5l1.5,2.3l-1.5,1.8l-1.5,-1.8z" fill="#12141a"/>
<rect x="1010.38" y="534.3" width="1.7" height="77.70000000000005" fill="#12141a"/>
<path d="M1011.23,536.5l1.5,2.3l-1.5,1.8l-1.5,-1.8z" fill="#12141a"/>
<rect x="1017.20" y="534.3" width="1.7" height="77.70000000000005" fill="#12141a"/>
<path d="M1018.05,536.5l1.5,2.3l-1.5,1.8l-1.5,-1.8z" fill="#12141a"/>
<rect x="1024.01" y="534.3" width="1.7" height="77.70000000000005" fill="#12141a"/>
<path d="M1024.86,536.5l1.5,2.3l-1.5,1.8l-1.5,-1.8z" fill="#12141a"/>
<rect x="1030.82" y="534.3" width="1.7" height="77.70000000000005" fill="#12141a"/>
<path d="M1031.67,536.5l1.5,2.3l-1.5,1.8l-1.5,-1.8z" fill="#12141a"/>
<rect x="1037.64" y="534.3" width="1.7" height="77.70000000000005" fill="#12141a"/>
<path d="M1038.49,536.5l1.5,2.3l-1.5,1.8l-1.5,-1.8z" fill="#12141a"/>
<rect x="1044.45" y="534.3" width="1.7" height="77.70000000000005" fill="#12141a"/>
<path d="M1045.30,536.5l1.5,2.3l-1.5,1.8l-1.5,-1.8z" fill="#12141a"/><rect x="636.6" y="534.3" width="27.699999999999932" height="16.700000000000045" fill="#dce3ef"/><rect x="636.6" y="551" width="16.399999999999977" height="61" fill="#c6c6c8"/><rect x="636.6" y="551" width="16.399999999999977" height="5" fill="#505257"/><rect x="653" y="551" width="11.299999999999955" height="61" fill="#e1e7f1"/><rect x="718.6" y="534.3" width="26.600000000000023" height="16.700000000000045" fill="#dce3ef"/><rect x="730" y="551" width="15.200000000000045" height="61" fill="#c6c6c8"/><rect x="730" y="551" width="15.200000000000045" height="5" fill="#505257"/><rect x="718.6" y="551" width="11.399999999999977" height="61" fill="#e1e7f1"/><rect x="636.6" y="550.4" width="108.60000000000002" height="1.2" fill="#3e4149"/><rect x="664.3" y="535.3" width="10.900000000000091" height="76.70000000000005" fill="#d2d5dc"/><rect x="706" y="535.3" width="12.600000000000023" height="76.70000000000005" fill="#d2d5dc"/><rect x="675.2" y="517.2" width="30.799999999999955" height="94.79999999999995" fill="#f4f4f4"/><rect x="681.2" y="517.2" width="18.799999999999955" height="5.5" fill="#7f7f7f"/><rect x="675.2" y="527.2" width="6" height="1.2" fill="#9a9a9a"/><rect x="700" y="527.2" width="6" height="1.2" fill="#9a9a9a"/><rect x="679.2" y="589" width="2" height="23" fill="#a0a0a0"/><rect x="700" y="589" width="2" height="23" fill="#a0a0a0"/><rect x="677.2" y="606" width="26.799999999999955" height="6" fill="#dcdcdc"/><rect x="669.2" y="517.2" width="6" height="94.79999999999995" fill="#0e0e0e"/><rect x="706" y="517.2" width="6" height="94.79999999999995" fill="#0e0e0e"/><path d="M341.5,603 V622 H349.5" fill="none" stroke="#c98080" stroke-width="1"/><path d="M341.5,603 V611" stroke="#3f5fb0" stroke-width="1"/><path d="M339.0,609 L342.0,613.5 L345.0,609 M342.0,613.5 V616" fill="none" stroke="#9ac040" stroke-width="1"/><path d="M349.0,631 l7,7 m0,-7 l-7,7" stroke="#b82828" stroke-width="1.4"/></svg>
<div class="t" style="left:322.0px;top:495.4px;font-size:11.5px;color:#b3b3b3;font-family:'Liberation Serif',serif;font-weight:bold;">Front</div>
<div class="a" style="left:312px;top:684px;width:759px;height:142px;background:#f9fafc;border:1px solid #a8a8a8"></div>
<div class="a" style="left:386px;top:658px;width:104px;height:27px;border:1px solid #9a9a9a;border-bottom:none;background:linear-gradient(#f4f4f4 0%,#e4e4e4 50%,#d2d2d2 100%)"></div>
<div class="a" style="left:312px;top:656px;width:74px;height:29px;border:1px solid #a8a8a8;border-bottom:none;background:#f9fafc"></div>
<div class="t" style="left:320.0px;top:665.0px;font-size:11px;color:#222;transform:scaleX(0.930);transform-origin:0 0;">Passi di aiuto</div>
<div class="t" style="left:390.0px;top:665.6px;font-size:11px;color:#222;transform:scaleX(0.930);transform-origin:0 0;">Informazioni utensile</div>
<div class="t" style="left:473.3px;top:691.4px;font-size:10.8px;color:#111;font-weight:bold;transform:scaleX(0.900);transform-origin:0 0;">Lato sinistro</div>
<div class="t" style="left:320.7px;top:706.6px;font-size:10.8px;color:#c62a2a;font-weight:bold;transform:scaleX(0.900);transform-origin:0 0;">Rimuovi: 2 utensili standard</div>
<div class="a" style="left:319.7px;top:721px;width:366.90000000000003px;height:98px;background:#fff;border:1px solid #8e8e8e"></div>
<div class="a" style="left:322.7px;top:739px;width:359.90000000000003px;height:2px;background:linear-gradient(#e2e2e2,#f4f4f4)"></div>
<div class="a" style="left:412.7px;top:724px;width:1.0px;height:16px;background:#e6e6e6"></div>
<div class="a" style="left:534.7px;top:724px;width:1.0px;height:16px;background:#e6e6e6"></div>
<div class="a" style="left:580.7px;top:724px;width:1.0px;height:16px;background:#e6e6e6"></div>
<div class="t" style="left:324.1px;top:725.6px;font-size:10.8px;color:#222;transform:scaleX(0.960);transform-origin:0 0;">Operazioni manuali</div>
<div class="t" style="left:464.4px;top:725.6px;font-size:10.8px;color:#222;transform:scaleX(0.900);transform-origin:0 0;">Tipo</div>
<div class="t" style="left:536.2px;top:725.6px;font-size:10.8px;color:#222;transform:scaleX(0.900);transform-origin:0 0;">Posizione</div>
<div class="t" style="left:332.3px;top:747.7px;font-size:10.8px;color:#b83a3a;transform:scaleX(0.900);transform-origin:0 0;">Rimuovi</div>
<div class="t" style="left:417.7px;top:747.7px;font-size:10.8px;color:#34346a;transform:scaleX(0.950);transform-origin:0 0;">Standard tool (Standard)</div>
<div class="t" style="left:538.9px;top:747.7px;font-size:10.8px;color:#34346a;transform:scaleX(0.900);transform-origin:0 0;">47</div>
<div class="t" style="left:332.3px;top:773.7px;font-size:10.8px;color:#b83a3a;transform:scaleX(0.900);transform-origin:0 0;">Rimuovi</div>
<div class="t" style="left:417.7px;top:773.7px;font-size:10.8px;color:#34346a;transform:scaleX(0.950);transform-origin:0 0;">Standard tool (Standard)</div>
<div class="t" style="left:538.9px;top:773.7px;font-size:10.8px;color:#34346a;transform:scaleX(0.900);transform-origin:0 0;">46</div>
<div class="t" style="left:853.5px;top:691.4px;font-size:10.8px;color:#111;font-weight:bold;transform:scaleX(0.900);transform-origin:0 0;">Lato destro</div>
<div class="t" style="left:697.8px;top:706.6px;font-size:10.8px;color:#c62a2a;font-weight:bold;transform:scaleX(0.900);transform-origin:0 0;">Rimuovi: 2 utensili standard</div>
<div class="a" style="left:696.8px;top:721px;width:367.0px;height:98px;background:#fff;border:1px solid #8e8e8e"></div>
<div class="a" style="left:699.8px;top:739px;width:360.0px;height:2px;background:linear-gradient(#e2e2e2,#f4f4f4)"></div>
<div class="a" style="left:789.8px;top:724px;width:1.0px;height:16px;background:#e6e6e6"></div>
<div class="a" style="left:911.8px;top:724px;width:1.0px;height:16px;background:#e6e6e6"></div>
<div class="a" style="left:957.8px;top:724px;width:1.0px;height:16px;background:#e6e6e6"></div>
<div class="t" style="left:701.2px;top:725.6px;font-size:10.8px;color:#222;transform:scaleX(0.960);transform-origin:0 0;">Operazioni manuali</div>
<div class="t" style="left:841.5px;top:725.6px;font-size:10.8px;color:#222;transform:scaleX(0.900);transform-origin:0 0;">Tipo</div>
<div class="t" style="left:913.3px;top:725.6px;font-size:10.8px;color:#222;transform:scaleX(0.900);transform-origin:0 0;">Posizione</div>
<div class="t" style="left:709.4px;top:747.7px;font-size:10.8px;color:#b83a3a;transform:scaleX(0.900);transform-origin:0 0;">Rimuovi</div>
<div class="t" style="left:794.8px;top:747.7px;font-size:10.8px;color:#34346a;transform:scaleX(0.950);transform-origin:0 0;">Standard tool (Standard)</div>
<div class="t" style="left:916.0px;top:747.7px;font-size:10.8px;color:#34346a;transform:scaleX(0.900);transform-origin:0 0;">47</div>
<div class="t" style="left:709.4px;top:773.7px;font-size:10.8px;color:#b83a3a;transform:scaleX(0.900);transform-origin:0 0;">Rimuovi</div>
<div class="t" style="left:794.8px;top:773.7px;font-size:10.8px;color:#34346a;transform:scaleX(0.950);transform-origin:0 0;">Standard tool (Standard)</div>
<div class="t" style="left:916.0px;top:773.7px;font-size:10.8px;color:#34346a;transform:scaleX(0.900);transform-origin:0 0;">46</div>
<div class="a" style="left:7px;top:837px;width:1072px;height:22px;background:#fff;border-radius:5px"></div>
<div class="t" style="left:472.0px;top:842.8px;font-size:12px;color:#b63838;transform:scaleX(0.972);transform-origin:0 0;">Test alarm number  700343</div>
</body></html>
